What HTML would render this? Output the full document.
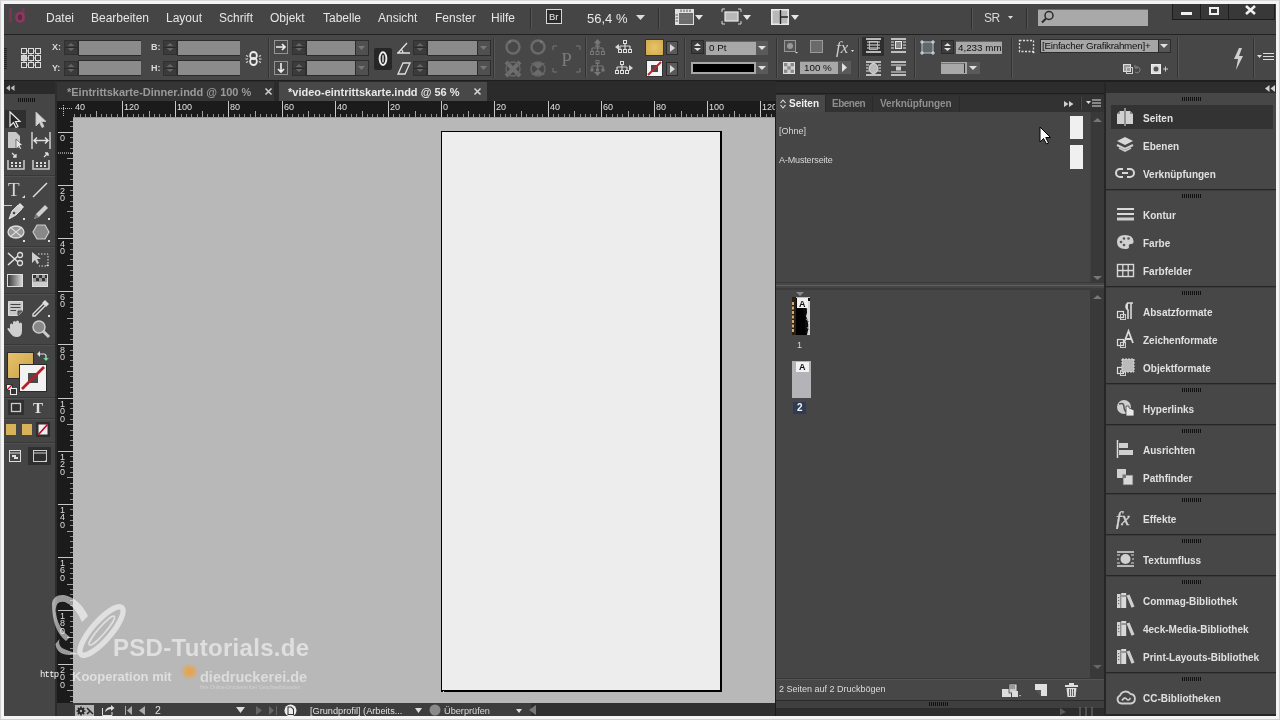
<!DOCTYPE html>
<html><head><meta charset="utf-8">
<style>
*{margin:0;padding:0;box-sizing:border-box}
html,body{width:1280px;height:720px;overflow:hidden;background:#f4f4f4;font-family:"Liberation Sans",sans-serif}
.a{position:absolute}
.t{position:absolute;white-space:nowrap;line-height:1;will-change:transform}
svg{overflow:visible;will-change:transform}
</style></head><body>
<div class="a" style="left:0px;top:0px;width:1px;height:720px;background:#d0d0d0;"></div>
<div class="a" style="left:0px;top:0px;width:1280px;height:1px;background:#d8d8d8;"></div>
<div class="a" style="left:1279px;top:0px;width:1px;height:720px;background:#d0d0d0;"></div>
<div class="a" style="left:0px;top:719px;width:1280px;height:1px;background:#d0d0d0;"></div>
<div class="a" style="left:4px;top:4px;width:1272px;height:712px;background:#464646;"></div>
<div class="a" style="left:4px;top:4px;width:1272px;height:30px;background:#454545;"></div>
<div class="a" style="left:4px;top:34px;width:1272px;height:1px;background:#222222;"></div>
<svg class="a" style="left:6px;top:6px;filter:blur(0.4px)" width="22" height="19" viewBox="0 0 22 19"><g fill="#7a3457"><rect x="3" y="2" width="3" height="14.5"/><rect x="15.5" y="2" width="3" height="14.5"/></g><ellipse cx="14" cy="11.3" rx="3.6" ry="4.2" fill="none" stroke="#8a3a62" stroke-width="2.6"/><ellipse cx="14" cy="11.3" rx="2" ry="2.8" fill="#5a2a40"/></svg>
<div class="t" style="left:46px;top:11.6px;font-size:12px;color:#e6e6e6;font-weight:normal;">Datei</div>
<div class="t" style="left:91px;top:11.6px;font-size:12px;color:#e6e6e6;font-weight:normal;">Bearbeiten</div>
<div class="t" style="left:166px;top:11.6px;font-size:12px;color:#e6e6e6;font-weight:normal;">Layout</div>
<div class="t" style="left:219px;top:11.6px;font-size:12px;color:#e6e6e6;font-weight:normal;">Schrift</div>
<div class="t" style="left:270px;top:11.6px;font-size:12px;color:#e6e6e6;font-weight:normal;">Objekt</div>
<div class="t" style="left:323px;top:11.6px;font-size:12px;color:#e6e6e6;font-weight:normal;">Tabelle</div>
<div class="t" style="left:378px;top:11.6px;font-size:12px;color:#e6e6e6;font-weight:normal;">Ansicht</div>
<div class="t" style="left:435px;top:11.6px;font-size:12px;color:#e6e6e6;font-weight:normal;">Fenster</div>
<div class="t" style="left:491px;top:11.6px;font-size:12px;color:#e6e6e6;font-weight:normal;">Hilfe</div>
<div class="a" style="left:530px;top:8px;width:1px;height:21px;background:#2e2e2e;"></div>
<div class="a" style="left:531px;top:8px;width:1px;height:21px;background:#555555;"></div>
<div class="a" style="left:658px;top:8px;width:1px;height:21px;background:#2e2e2e;"></div>
<div class="a" style="left:659px;top:8px;width:1px;height:21px;background:#555555;"></div>
<div class="a" style="left:971px;top:8px;width:1px;height:21px;background:#2e2e2e;"></div>
<div class="a" style="left:972px;top:8px;width:1px;height:21px;background:#555555;"></div>
<div class="a" style="left:1026px;top:8px;width:1px;height:21px;background:#2e2e2e;"></div>
<div class="a" style="left:1027px;top:8px;width:1px;height:21px;background:#555555;"></div>
<div class="a" style="left:546px;top:9px;width:16px;height:15px;background:#2a2a2a;border:1px solid #d8d8d8"></div>
<div class="t" style="left:549px;top:12px;font-size:9.5px;color:#e8e8e8;font-weight:normal;">Br</div>
<div class="t" style="left:587px;top:11.5px;font-size:13px;color:#e8e8e8;font-weight:normal;">56,4 %</div>
<svg class="a" style="left:636px;top:15px;" width="10" height="6" viewBox="0 0 10 6"><path d="M0 0H9L4.5 5Z" fill="#dcdcdc"/></svg>
<svg class="a" style="left:675px;top:9px;" width="19" height="16" viewBox="0 0 19 16"><rect x="0" y="0" width="19" height="16" fill="#e0e0e0"/><rect x="4" y="4" width="14" height="11" fill="#6c6c6c"/><path d="M6 0.5V3M9 0.5V3M12 0.5V3M15 0.5V3M0.5 6H3M0.5 9H3M0.5 12H3" stroke="#555" stroke-width="1"/><path d="M4 7H18M4 10H18" stroke="#7a7a7a" stroke-width="0.8"/></svg>
<svg class="a" style="left:695px;top:15px;" width="9" height="6" viewBox="0 0 9 6"><path d="M0 0H8L4 5Z" fill="#e6e6e6"/></svg>
<svg class="a" style="left:722px;top:9px;" width="19" height="15" viewBox="0 0 19 15"><path d="M0 3V0H3M16 0H19V3M19 12V15H16M3 15H0V12" fill="none" stroke="#d8d8d8"/><rect x="3" y="3" width="13" height="9" fill="#b8b8b8" stroke="#e8e8e8" stroke-width="1.2"/></svg>
<svg class="a" style="left:743px;top:15px;" width="9" height="6" viewBox="0 0 9 6"><path d="M0 0H8L4 5Z" fill="#e6e6e6"/></svg>
<svg class="a" style="left:771px;top:9px;" width="18" height="16" viewBox="0 0 18 16"><rect x="0.8" y="0.8" width="16.4" height="14.4" fill="#b8b8b8" stroke="#e8e8e8" stroke-width="1.6"/><path d="M9.5 1V15M9.5 8H17" stroke="#222" stroke-width="1.4"/></svg>
<svg class="a" style="left:791px;top:15px;" width="9" height="6" viewBox="0 0 9 6"><path d="M0 0H8L4 5Z" fill="#e6e6e6"/></svg>
<div class="t" style="left:984px;top:12px;font-size:12px;color:#d8d8d8;font-weight:normal;letter-spacing:-0.5px">SR</div>
<svg class="a" style="left:1008px;top:16px;" width="6" height="4" viewBox="0 0 6 4"><path d="M0 0H5L2.5 3Z" fill="#dcdcdc"/></svg>
<div class="a" style="left:1038px;top:9px;width:110px;height:17px;background:#a9a9a9;border-top:1px solid #6a6a6a"></div>
<svg class="a" style="left:1041px;top:10px;" width="14" height="14" viewBox="0 0 14 14"><circle cx="8" cy="5.5" r="4" fill="none" stroke="#2a2a2a" stroke-width="1.5"/><path d="M5 8.5L1 12.5" stroke="#2a2a2a" stroke-width="2"/></svg>
<div class="a" style="left:1172px;top:4px;width:103px;height:16px;background:#383838;border:1px solid #1c1c1c;border-top:none"></div>
<div class="a" style="left:1200px;top:4px;width:1px;height:16px;background:#1c1c1c;"></div>
<div class="a" style="left:1228px;top:4px;width:1px;height:16px;background:#1c1c1c;"></div>
<div class="a" style="left:1181px;top:12px;width:11px;height:3px;background:#f0f0f0;"></div>
<div class="a" style="left:1209px;top:7px;width:10px;height:8px;background:transparent;border:2px solid #f0f0f0"></div>
<svg class="a" style="left:1245px;top:5px;" width="11" height="10" viewBox="0 0 11 10"><path d="M1 1L10 9M10 1L1 9" stroke="#f0f0f0" stroke-width="2.6"/></svg>
<div class="a" style="left:4px;top:35px;width:1272px;height:46px;background:#474747;"></div>
<div class="a" style="left:4px;top:80px;width:1272px;height:1px;background:#1e1e1e;"></div>
<div class="a" style="left:4px;top:48px;width:3px;height:1px;background:#222;"></div>
<div class="a" style="left:4px;top:50px;width:3px;height:1px;background:#222;"></div>
<div class="a" style="left:4px;top:52px;width:3px;height:1px;background:#222;"></div>
<div class="a" style="left:4px;top:54px;width:3px;height:1px;background:#222;"></div>
<div class="a" style="left:4px;top:56px;width:3px;height:1px;background:#222;"></div>
<div class="a" style="left:4px;top:58px;width:3px;height:1px;background:#222;"></div>
<div class="a" style="left:4px;top:60px;width:3px;height:1px;background:#222;"></div>
<div class="a" style="left:4px;top:62px;width:3px;height:1px;background:#222;"></div>
<div class="a" style="left:4px;top:64px;width:3px;height:1px;background:#222;"></div>
<div class="a" style="left:4px;top:66px;width:3px;height:1px;background:#222;"></div>
<div class="a" style="left:4px;top:68px;width:3px;height:1px;background:#222;"></div>
<svg class="a" style="left:21px;top:48px;" width="20" height="20" viewBox="0 0 20 20"><rect x="0.5" y="0.5" width="5" height="5" fill="none" stroke="#dcdcdc" stroke-width="1"/><rect x="0.5" y="7.5" width="5" height="5" fill="#cfcfcf" stroke="#dcdcdc" stroke-width="1"/><rect x="0.5" y="14.5" width="5" height="5" fill="none" stroke="#dcdcdc" stroke-width="1"/><rect x="7.5" y="0.5" width="5" height="5" fill="none" stroke="#dcdcdc" stroke-width="1"/><rect x="7.5" y="7.5" width="5" height="5" fill="none" stroke="#dcdcdc" stroke-width="1"/><rect x="7.5" y="14.5" width="5" height="5" fill="none" stroke="#dcdcdc" stroke-width="1"/><rect x="14.5" y="0.5" width="5" height="5" fill="none" stroke="#dcdcdc" stroke-width="1"/><rect x="14.5" y="7.5" width="5" height="5" fill="none" stroke="#dcdcdc" stroke-width="1"/><rect x="14.5" y="14.5" width="5" height="5" fill="none" stroke="#dcdcdc" stroke-width="1"/><path d="M6 3H7M13 3H14M6 10H7M13 10H14M6 17H7M13 17H14M3 6V7M3 13V14M10 6V7M10 13V14M17 6V7M17 13V14" stroke="#dcdcdc"/></svg>
<div class="t" style="left:52px;top:43px;font-size:9px;color:#d8d8d8;font-weight:bold;">X:</div>
<div class="t" style="left:52px;top:64px;font-size:9px;color:#d8d8d8;font-weight:bold;">Y:</div>
<div class="a" style="left:64px;top:40px;width:14px;height:15px;background:#3b3b3b;border:1px solid #303030"></div>
<div class="a" style="left:65px;top:47px;width:12px;height:1px;background:#2a2a2a;"></div>
<svg class="a" style="left:67px;top:42px;" width="9" height="11" viewBox="0 0 9 11"><path d="M0.5 4L4 1L7.5 4Z" fill="#666"/><path d="M0.5 6L4 9L7.5 6Z" fill="#666"/></svg>
<div class="a" style="left:78px;top:40px;width:63px;height:16px;background:#8b8b8b;border:1px solid #2c2c2c;border-right:none"></div>
<div class="a" style="left:64px;top:61px;width:14px;height:15px;background:#3b3b3b;border:1px solid #303030"></div>
<div class="a" style="left:65px;top:68px;width:12px;height:1px;background:#2a2a2a;"></div>
<svg class="a" style="left:67px;top:63px;" width="9" height="11" viewBox="0 0 9 11"><path d="M0.5 4L4 1L7.5 4Z" fill="#666"/><path d="M0.5 6L4 9L7.5 6Z" fill="#666"/></svg>
<div class="a" style="left:78px;top:60px;width:63px;height:16px;background:#8b8b8b;border:1px solid #2c2c2c;border-right:none"></div>
<div class="t" style="left:151px;top:43px;font-size:9px;color:#d8d8d8;font-weight:bold;">B:</div>
<div class="t" style="left:151px;top:64px;font-size:9px;color:#d8d8d8;font-weight:bold;">H:</div>
<div class="a" style="left:163px;top:40px;width:14px;height:15px;background:#3b3b3b;border:1px solid #303030"></div>
<div class="a" style="left:164px;top:47px;width:12px;height:1px;background:#2a2a2a;"></div>
<svg class="a" style="left:166px;top:42px;" width="9" height="11" viewBox="0 0 9 11"><path d="M0.5 4L4 1L7.5 4Z" fill="#666"/><path d="M0.5 6L4 9L7.5 6Z" fill="#666"/></svg>
<div class="a" style="left:177px;top:40px;width:63px;height:16px;background:#8b8b8b;border:1px solid #2c2c2c;border-right:none"></div>
<div class="a" style="left:163px;top:61px;width:14px;height:15px;background:#3b3b3b;border:1px solid #303030"></div>
<div class="a" style="left:164px;top:68px;width:12px;height:1px;background:#2a2a2a;"></div>
<svg class="a" style="left:166px;top:63px;" width="9" height="11" viewBox="0 0 9 11"><path d="M0.5 4L4 1L7.5 4Z" fill="#666"/><path d="M0.5 6L4 9L7.5 6Z" fill="#666"/></svg>
<div class="a" style="left:177px;top:60px;width:63px;height:16px;background:#8b8b8b;border:1px solid #2c2c2c;border-right:none"></div>
<svg class="a" style="left:245px;top:51px;" width="17" height="16" viewBox="0 0 17 16"><rect x="5.2" y="1" width="6.6" height="7.2" rx="3.3" fill="none" stroke="#ececec" stroke-width="1.8"/><rect x="5.2" y="6.8" width="6.6" height="7.2" rx="3.3" fill="none" stroke="#ececec" stroke-width="1.8"/><path d="M1 4.5L3.2 5.5M0.5 8H3M1 11.5L3.2 10.5M16 4.5L13.8 5.5M16.5 8H14M16 11.5L13.8 10.5" stroke="#e0e0e0" stroke-width="1.1"/></svg>
<div class="a" style="left:268px;top:38px;width:1px;height:40px;background:#333;"></div>
<div class="a" style="left:269px;top:38px;width:1px;height:40px;background:#555;"></div>
<svg class="a" style="left:274px;top:40px;" width="14" height="14" viewBox="0 0 14 14"><rect x="0.5" y="0.5" width="13" height="13" fill="none" stroke="#e0e0e0" stroke-dasharray="1 1"/><path d="M2 7H11M8 4L11 7L8 10" stroke="#f0f0f0" stroke-width="1.6" fill="none"/></svg>
<svg class="a" style="left:274px;top:61px;" width="14" height="14" viewBox="0 0 14 14"><rect x="0.5" y="0.5" width="13" height="13" fill="none" stroke="#e0e0e0" stroke-dasharray="1 1"/><path d="M7 2V11M4 8L7 11L10 8" stroke="#f0f0f0" stroke-width="1.6" fill="none"/></svg>
<div class="a" style="left:292px;top:40px;width:14px;height:15px;background:#3b3b3b;border:1px solid #303030"></div>
<div class="a" style="left:293px;top:47px;width:12px;height:1px;background:#2a2a2a;"></div>
<svg class="a" style="left:295px;top:42px;" width="9" height="11" viewBox="0 0 9 11"><path d="M0.5 4L4 1L7.5 4Z" fill="#666"/><path d="M0.5 6L4 9L7.5 6Z" fill="#666"/></svg>
<div class="a" style="left:306px;top:40px;width:49px;height:16px;background:#8b8b8b;border:1px solid #2c2c2c;border-right:none"></div>
<div class="a" style="left:355px;top:40px;width:14px;height:16px;background:#505050;border:1px solid #2c2c2c"></div>
<svg class="a" style="left:358px;top:46px;" width="8" height="5" viewBox="0 0 8 5"><path d="M0 0H7L3.5 4Z" fill="#777"/></svg>
<div class="a" style="left:292px;top:61px;width:14px;height:15px;background:#3b3b3b;border:1px solid #303030"></div>
<div class="a" style="left:293px;top:68px;width:12px;height:1px;background:#2a2a2a;"></div>
<svg class="a" style="left:295px;top:63px;" width="9" height="11" viewBox="0 0 9 11"><path d="M0.5 4L4 1L7.5 4Z" fill="#666"/><path d="M0.5 6L4 9L7.5 6Z" fill="#666"/></svg>
<div class="a" style="left:306px;top:60px;width:49px;height:16px;background:#8b8b8b;border:1px solid #2c2c2c;border-right:none"></div>
<div class="a" style="left:355px;top:60px;width:14px;height:16px;background:#505050;border:1px solid #2c2c2c"></div>
<svg class="a" style="left:358px;top:66px;" width="8" height="5" viewBox="0 0 8 5"><path d="M0 0H7L3.5 4Z" fill="#777"/></svg>
<div class="a" style="left:374px;top:48px;width:18px;height:22px;background:#262626;border-radius:2px"></div>
<svg class="a" style="left:378px;top:51px;" width="10" height="16" viewBox="0 0 10 16"><ellipse cx="5" cy="7.6" rx="3.4" ry="6.4" fill="none" stroke="#efefef" stroke-width="1.9"/><rect x="4.2" y="4" width="1.6" height="7.5" rx="0.8" fill="#cfcfcf"/></svg>
<svg class="a" style="left:396px;top:41px;" width="15" height="13" viewBox="0 0 15 13"><path d="M1 12H14M2 12L11 2M7 12A6 6 0 0 0 5 8" stroke="#e0e0e0" stroke-width="1.3" fill="none"/></svg>
<svg class="a" style="left:397px;top:62px;" width="14" height="13" viewBox="0 0 14 13"><path d="M1 12L6 1H13L8 12Z" stroke="#e0e0e0" stroke-width="1.3" fill="none"/></svg>
<div class="a" style="left:413px;top:40px;width:14px;height:15px;background:#3b3b3b;border:1px solid #303030"></div>
<div class="a" style="left:414px;top:47px;width:12px;height:1px;background:#2a2a2a;"></div>
<svg class="a" style="left:416px;top:42px;" width="9" height="11" viewBox="0 0 9 11"><path d="M0.5 4L4 1L7.5 4Z" fill="#666"/><path d="M0.5 6L4 9L7.5 6Z" fill="#666"/></svg>
<div class="a" style="left:427px;top:40px;width:50px;height:16px;background:#8b8b8b;border:1px solid #2c2c2c;border-right:none"></div>
<div class="a" style="left:477px;top:40px;width:14px;height:16px;background:#505050;border:1px solid #2c2c2c"></div>
<svg class="a" style="left:480px;top:46px;" width="8" height="5" viewBox="0 0 8 5"><path d="M0 0H7L3.5 4Z" fill="#777"/></svg>
<div class="a" style="left:413px;top:61px;width:14px;height:15px;background:#3b3b3b;border:1px solid #303030"></div>
<div class="a" style="left:414px;top:68px;width:12px;height:1px;background:#2a2a2a;"></div>
<svg class="a" style="left:416px;top:63px;" width="9" height="11" viewBox="0 0 9 11"><path d="M0.5 4L4 1L7.5 4Z" fill="#666"/><path d="M0.5 6L4 9L7.5 6Z" fill="#666"/></svg>
<div class="a" style="left:427px;top:60px;width:50px;height:16px;background:#8b8b8b;border:1px solid #2c2c2c;border-right:none"></div>
<div class="a" style="left:477px;top:60px;width:14px;height:16px;background:#505050;border:1px solid #2c2c2c"></div>
<svg class="a" style="left:480px;top:66px;" width="8" height="5" viewBox="0 0 8 5"><path d="M0 0H7L3.5 4Z" fill="#777"/></svg>
<div class="a" style="left:493px;top:38px;width:1px;height:40px;background:#333;"></div>
<div class="a" style="left:494px;top:38px;width:1px;height:40px;background:#555;"></div>
<svg class="a" style="left:505px;top:39px;" width="16" height="16" viewBox="0 0 16 16"><circle cx="8" cy="8" r="6.5" fill="none" stroke="#6a6a6a" stroke-width="2.5"/><path d="M3 2L7 1L5 5Z" fill="#777"/></svg>
<svg class="a" style="left:530px;top:39px;" width="16" height="16" viewBox="0 0 16 16"><circle cx="8" cy="8" r="6.5" fill="none" stroke="#6a6a6a" stroke-width="2.5"/><path d="M13 2L9 1L11 5Z" fill="#777"/></svg>
<svg class="a" style="left:505px;top:61px;" width="16" height="16" viewBox="0 0 16 16"><path d="M1 1L15 15M15 1L1 15" stroke="#6e6e6e" stroke-width="4"/><circle cx="8" cy="8" r="7" fill="none" stroke="#666" stroke-width="1.5"/></svg>
<svg class="a" style="left:530px;top:61px;" width="16" height="16" viewBox="0 0 16 16"><path d="M1 2H15L1 14H15Z" fill="#6a6a6a"/><circle cx="8" cy="8" r="7" fill="none" stroke="#666" stroke-width="1.5"/></svg>
<svg class="a" style="left:553px;top:46px;" width="27" height="26" viewBox="0 0 27 26"><path d="M0 4V0H4M23 0H27V4M27 22V26H23M4 26H0V22" fill="none" stroke="#777"/><text x="13.5" y="20" font-family="Liberation Serif" font-size="19" fill="#7a7a7a" text-anchor="middle">P</text></svg>
<div class="a" style="left:585px;top:38px;width:1px;height:40px;background:#333;"></div>
<div class="a" style="left:586px;top:38px;width:1px;height:40px;background:#555;"></div>
<svg class="a" style="left:590px;top:39px;" width="15" height="16" viewBox="0 0 15 16"><path d="M7.5 0L11 4H4Z" fill="#777"/><path d="M7.5 5V9M2 9H13M2 9V13M7.5 9V13M13 9V13" stroke="#777" stroke-width="1.2"/><rect x="0.5" y="12.5" width="3" height="3" fill="none" stroke="#777"/><rect x="6" y="12.5" width="3" height="3" fill="none" stroke="#777"/><rect x="11.5" y="12.5" width="3" height="3" fill="none" stroke="#777"/><rect x="6" y="4.5" width="3" height="3" fill="none" stroke="#777"/></svg>
<svg class="a" style="left:590px;top:60px;" width="15" height="16" viewBox="0 0 15 16"><path d="M7.5 16L11 12H4Z" fill="#777"/><path d="M7.5 2V6M2 6H13M2 6V10M7.5 6V10M13 6V10" stroke="#777" stroke-width="1.2"/><rect x="0.5" y="8.5" width="3" height="3" fill="#777"/><rect x="6" y="8.5" width="3" height="3" fill="#777"/><rect x="11.5" y="8.5" width="3" height="3" fill="#777"/><rect x="6" y="0.5" width="3" height="3" fill="none" stroke="#777"/></svg>
<svg class="a" style="left:615px;top:40px;" width="18" height="14" viewBox="0 0 18 14"><path d="M0 7L4 4V10Z" fill="#d8d8d8"/><path d="M10 3V6M5 6H15M5 6V9M10 6V9M15 6V9" stroke="#d8d8d8" stroke-width="1.2"/><rect x="3.5" y="9.5" width="3" height="3" fill="none" stroke="#e0e0e0"/><rect x="8.5" y="9.5" width="3" height="3" fill="none" stroke="#e0e0e0"/><rect x="13.5" y="9.5" width="3" height="3" fill="none" stroke="#e0e0e0"/><rect x="8.5" y="0.5" width="3" height="3" fill="none" stroke="#e0e0e0"/></svg>
<svg class="a" style="left:615px;top:61px;" width="18" height="14" viewBox="0 0 18 14"><path d="M18 7L14 4V10Z" fill="#d8d8d8"/><path d="M7 3V6M2 6H12M2 6V9M7 6V9M12 6V9" stroke="#d8d8d8" stroke-width="1.2"/><rect x="0.5" y="9.5" width="3" height="3" fill="none" stroke="#e0e0e0"/><rect x="5.5" y="9.5" width="3" height="3" fill="none" stroke="#e0e0e0"/><rect x="10.5" y="9.5" width="3" height="3" fill="none" stroke="#e0e0e0"/><rect x="5.5" y="0.5" width="3" height="3" fill="none" stroke="#e0e0e0"/></svg>
<div class="a" style="left:645px;top:39px;width:19px;height:17px;background:#d9b55a;border:1px solid #333;background:radial-gradient(circle at 50% 50%,#e8c468,#cfa94f)"></div>
<div class="a" style="left:666px;top:41px;width:12px;height:14px;background:#5a5a5a;border:1px solid #2a2a2a"></div>
<svg class="a" style="left:669px;top:44px;" width="7" height="8" viewBox="0 0 7 8"><path d="M1 0L6 4L1 8Z" fill="#d8d8d8"/></svg>
<div class="a" style="left:646px;top:60px;width:17px;height:17px;background:#f4f4f4;border:1px solid #333"></div>
<svg class="a" style="left:647px;top:61px;" width="15" height="15" viewBox="0 0 15 15"><rect x="4" y="4" width="7" height="7" fill="#4a4a4a"/><path d="M1 14L14 1" stroke="#c8202a" stroke-width="2"/></svg>
<div class="a" style="left:666px;top:62px;width:12px;height:14px;background:#5a5a5a;border:1px solid #2a2a2a"></div>
<svg class="a" style="left:669px;top:65px;" width="7" height="8" viewBox="0 0 7 8"><path d="M1 0L6 4L1 8Z" fill="#d8d8d8"/></svg>
<div class="a" style="left:684px;top:38px;width:1px;height:40px;background:#333;"></div>
<div class="a" style="left:685px;top:38px;width:1px;height:40px;background:#555;"></div>
<div class="a" style="left:691px;top:40px;width:13px;height:14px;background:#3c3c3c;border:1px solid #2a2a2a"></div>
<svg class="a" style="left:693px;top:42px;" width="9" height="10" viewBox="0 0 9 10"><path d="M1 4L4.5 1L8 4Z" fill="#e0e0e0"/><path d="M1 6L4.5 9L8 6Z" fill="#e0e0e0"/></svg>
<div class="a" style="left:706px;top:41px;width:50px;height:14px;background:#a8a8a8;border-top:1px solid #666"></div>
<div class="t" style="left:709px;top:43px;font-size:9.8px;color:#111;font-weight:normal;">0 Pt</div>
<div class="a" style="left:756px;top:41px;width:12px;height:14px;background:#5a5a5a;"></div>
<svg class="a" style="left:758px;top:46px;" width="9" height="5" viewBox="0 0 9 5"><path d="M0 0H8L4 4Z" fill="#e0e0e0"/></svg>
<div class="a" style="left:691px;top:62px;width:65px;height:12px;background:#a8a8a8;"></div>
<div class="a" style="left:693px;top:64px;width:61px;height:8px;background:#000;"></div>
<div class="a" style="left:756px;top:62px;width:12px;height:12px;background:#5a5a5a;"></div>
<svg class="a" style="left:758px;top:66px;" width="9" height="5" viewBox="0 0 9 5"><path d="M0 0H8L4 4Z" fill="#e0e0e0"/></svg>
<div class="a" style="left:776px;top:38px;width:1px;height:40px;background:#333;"></div>
<div class="a" style="left:777px;top:38px;width:1px;height:40px;background:#555;"></div>
<svg class="a" style="left:784px;top:40px;" width="14" height="13" viewBox="0 0 14 13"><rect x="0.5" y="0.5" width="11" height="11" fill="#555" stroke="#e0e0e0" stroke-dasharray="1 1"/><circle cx="6" cy="6" r="3" fill="#999"/><path d="M11 12H14L12.5 13.5Z" fill="#ddd"/></svg>
<svg class="a" style="left:810px;top:40px;" width="14" height="13" viewBox="0 0 14 13"><rect x="0.5" y="0.5" width="12" height="12" fill="#6a6a6a" stroke="#9a9a9a"/></svg>
<div class="t" style="left:836px;top:39px;font-size:17px;color:#cfcfcf;font-weight:normal;font-family:'Liberation Serif'"><i>fx</i></div>
<svg class="a" style="left:851px;top:50px;" width="4" height="3" viewBox="0 0 4 3"><path d="M0 0H3L1.5 2Z" fill="#ddd"/></svg>
<svg class="a" style="left:783px;top:62px;" width="12" height="12" viewBox="0 0 12 12"><rect x="0.5" y="0.5" width="11" height="11" fill="#cfcfcf" stroke="#ddd"/><rect x="1" y="1" width="3.3" height="3.3" fill="#888"/><rect x="7.6" y="1" width="3.3" height="3.3" fill="#888"/><rect x="4.3" y="4.3" width="3.3" height="3.3" fill="#888"/><rect x="1" y="7.6" width="3.3" height="3.3" fill="#888"/><rect x="7.6" y="7.6" width="3.3" height="3.3" fill="#888"/></svg>
<div class="a" style="left:800px;top:61px;width:38px;height:13px;background:#a8a8a8;border-top:1px solid #666"></div>
<div class="t" style="left:804px;top:62.8px;font-size:9.8px;color:#111;font-weight:normal;">100 %</div>
<div class="a" style="left:838px;top:61px;width:13px;height:13px;background:#5a5a5a;"></div>
<svg class="a" style="left:842px;top:63px;" width="6" height="9" viewBox="0 0 6 9"><path d="M0 0L5 4.5L0 9Z" fill="#e0e0e0"/></svg>
<div class="a" style="left:858px;top:38px;width:1px;height:40px;background:#333;"></div>
<div class="a" style="left:859px;top:38px;width:1px;height:40px;background:#555;"></div>
<div class="a" style="left:862px;top:37px;width:22px;height:19px;background:#2e2e2e;"></div>
<svg class="a" style="left:866px;top:38px;" width="15" height="15" viewBox="0 0 15 15"><path d="M0 1H15M0 14H15" stroke="#e8e8e8" stroke-width="1.3"/><path d="M1 4H14M1 7H14M1 10H14" stroke="#e8e8e8" stroke-width="1"/><rect x="3.5" y="3.5" width="8" height="8" fill="none" stroke="#ccc" stroke-width="0.8"/></svg>
<svg class="a" style="left:891px;top:38px;" width="15" height="15" viewBox="0 0 15 15"><path d="M0 1H15M0 14H15" stroke="#e8e8e8" stroke-width="1.3"/><path d="M0 4H3M12 4H15M0 7H3M12 7H15M0 10H3M12 10H15" stroke="#e8e8e8"/><rect x="4.5" y="3.5" width="6" height="7" fill="#888" stroke="#e8e8e8"/></svg>
<svg class="a" style="left:866px;top:61px;" width="15" height="15" viewBox="0 0 15 15"><path d="M0 1H15M0 14H15" stroke="#e8e8e8" stroke-width="1.3"/><path d="M0 4H3M12 4H15M0 7H2M13 7H15M0 10H3M12 10H15" stroke="#e8e8e8"/><ellipse cx="7.5" cy="7.5" rx="4.5" ry="5" fill="#bbb" stroke="#e8e8e8"/></svg>
<svg class="a" style="left:891px;top:61px;" width="15" height="15" viewBox="0 0 15 15"><path d="M0 1H15M0 14H15" stroke="#e8e8e8" stroke-width="1.3"/><path d="M0 4H15M0 11H15" stroke="#e8e8e8" stroke-width="1.2"/><rect x="5" y="5.5" width="5" height="4" fill="#ccc"/></svg>
<div class="a" style="left:914px;top:38px;width:1px;height:40px;background:#333;"></div>
<div class="a" style="left:915px;top:38px;width:1px;height:40px;background:#555;"></div>
<svg class="a" style="left:920px;top:40px;" width="15" height="15" viewBox="0 0 15 15"><rect x="2" y="2" width="11" height="11" fill="#666" stroke="#9bb" stroke-width="1.2"/><path d="M0 2H4M2 0V4M11 2H15M13 0V4M0 13H4M2 11V15M11 13H15M13 11V15" stroke="#cde" stroke-width="1"/></svg>
<div class="a" style="left:941px;top:40px;width:13px;height:14px;background:#3c3c3c;border:1px solid #2a2a2a"></div>
<svg class="a" style="left:943px;top:42px;" width="9" height="10" viewBox="0 0 9 10"><path d="M1 4L4.5 1L8 4Z" fill="#e0e0e0"/><path d="M1 6L4.5 9L8 6Z" fill="#e0e0e0"/></svg>
<div class="a" style="left:956px;top:41px;width:46px;height:13px;background:#a8a8a8;border-top:1px solid #666"></div>
<div class="t" style="left:958px;top:42.5px;font-size:9.8px;color:#111;font-weight:normal;">4,233 mm</div>
<div class="a" style="left:941px;top:62px;width:26px;height:12px;background:#a8a8a8;"></div>
<div class="a" style="left:941px;top:63px;width:24px;height:10px;background:#a8a8a8;border-right:1px solid #333;border-top:1px solid #777"></div>
<div class="a" style="left:967px;top:62px;width:13px;height:12px;background:#5a5a5a;"></div>
<svg class="a" style="left:969px;top:66px;" width="9" height="5" viewBox="0 0 9 5"><path d="M0 0H8L4 4Z" fill="#e0e0e0"/></svg>
<div class="a" style="left:1011px;top:38px;width:1px;height:40px;background:#333;"></div>
<div class="a" style="left:1012px;top:38px;width:1px;height:40px;background:#555;"></div>
<svg class="a" style="left:1019px;top:40px;" width="16" height="13" viewBox="0 0 16 13"><rect x="0.5" y="0.5" width="14" height="11" fill="none" stroke="#ddd" stroke-dasharray="2 1.5" stroke-width="1.3"/><path d="M13 12H16L14.5 13.5Z" fill="#ddd"/></svg>
<div class="a" style="left:1040px;top:39px;width:118px;height:14px;background:#a6a6a6;border:1px solid #2c2c2c;border-right:none"></div>
<div class="t" style="left:1042px;top:41px;font-size:9.8px;color:#111;font-weight:normal;letter-spacing:-0.25px">[Einfacher Grafikrahmen]+</div>
<div class="a" style="left:1158px;top:39px;width:13px;height:14px;background:#555;border:1px solid #2c2c2c"></div>
<svg class="a" style="left:1160px;top:44px;" width="9" height="5" viewBox="0 0 9 5"><path d="M0 0H8L4 4Z" fill="#e0e0e0"/></svg>
<svg class="a" style="left:1123px;top:64px;" width="20" height="10" viewBox="0 0 20 10"><rect x="0.5" y="0.5" width="7" height="7" fill="#999" stroke="#ddd"/><rect x="3.5" y="3.5" width="6" height="6" fill="none" stroke="#ccc"/><path d="M13 3A3 3 0 1 1 12 8M12 1V4H15" stroke="#888" fill="none"/></svg>
<svg class="a" style="left:1151px;top:64px;" width="18" height="10" viewBox="0 0 18 10"><rect x="0.5" y="0.5" width="9" height="9" fill="#ddd" stroke="#eee"/><circle cx="5" cy="5" r="2.5" fill="#555"/><path d="M12 5H17M14.5 2.5V7.5" stroke="#ccc"/></svg>
<div class="a" style="left:1177px;top:38px;width:1px;height:40px;background:#333;"></div>
<div class="a" style="left:1178px;top:38px;width:1px;height:40px;background:#555;"></div>
<svg class="a" style="left:1233px;top:48px;" width="11" height="23" viewBox="0 0 11 23"><path d="M6 0L1 11H5L3 22L10 8H6L9 0Z" fill="#cfcfcf"/></svg>
<div class="a" style="left:1253px;top:38px;width:1px;height:40px;background:#333;"></div>
<div class="a" style="left:1254px;top:38px;width:1px;height:40px;background:#555;"></div>
<svg class="a" style="left:1257px;top:53px;" width="17" height="8" viewBox="0 0 17 8"><path d="M0 2H5L2.5 5Z" fill="#ddd"/><path d="M6 0.5H17M6 3.5H17M6 6.5H17" stroke="#ddd" stroke-width="1.2"/></svg>
<div class="a" style="left:4px;top:81px;width:1272px;height:14px;background:#2e2e2e;"></div>
<div class="a" style="left:57px;top:81px;width:719px;height:20px;background:#2b2b2b;"></div>
<div class="a" style="left:4px;top:81px;width:51px;height:13px;background:#2a2a2a;"></div>
<svg class="a" style="left:6px;top:85px;" width="9" height="6" viewBox="0 0 9 6"><path d="M0 3L4 0V6Z M4.5 3L8.5 0V6Z" fill="#bbb"/></svg>
<div class="a" style="left:57px;top:82px;width:217px;height:19px;background:#353535;"></div>
<div class="t" style="left:67px;top:87.3px;font-size:11px;color:#9a9a9a;font-weight:bold;">*Eintrittskarte-Dinner.indd @ 100 %</div>
<svg class="a" style="left:265px;top:88px;" width="7" height="7" viewBox="0 0 7 7"><path d="M0.5 0.5L6.5 6.5M6.5 0.5L0.5 6.5" stroke="#d0d0d0" stroke-width="1.5"/></svg>
<div class="a" style="left:279px;top:82px;width:208px;height:19px;background:#484848;"></div>
<div class="t" style="left:288px;top:87.3px;font-size:11px;color:#e8e8e8;font-weight:bold;">*video-eintrittskarte.indd @ 56 %</div>
<svg class="a" style="left:474px;top:88px;" width="7" height="7" viewBox="0 0 7 7"><path d="M0.5 0.5L6.5 6.5M6.5 0.5L0.5 6.5" stroke="#d8d8d8" stroke-width="1.5"/></svg>
<div class="a" style="left:4px;top:94px;width:51px;height:622px;background:#454545;"></div>
<div class="a" style="left:55px;top:94px;width:2px;height:622px;background:#2c2c2c;"></div>
<div class="a" style="left:18px;top:98px;width:1px;height:4px;background:#111;"></div>
<div class="a" style="left:20px;top:98px;width:1px;height:4px;background:#111;"></div>
<div class="a" style="left:22px;top:98px;width:1px;height:4px;background:#111;"></div>
<div class="a" style="left:24px;top:98px;width:1px;height:4px;background:#111;"></div>
<div class="a" style="left:26px;top:98px;width:1px;height:4px;background:#111;"></div>
<div class="a" style="left:28px;top:98px;width:1px;height:4px;background:#111;"></div>
<div class="a" style="left:30px;top:98px;width:1px;height:4px;background:#111;"></div>
<div class="a" style="left:32px;top:98px;width:1px;height:4px;background:#111;"></div>
<div class="a" style="left:34px;top:98px;width:1px;height:4px;background:#111;"></div>
<div class="a" style="left:4px;top:175px;width:51px;height:1px;background:#383838;"></div>
<div class="a" style="left:4px;top:176px;width:51px;height:1px;background:#505050;"></div>
<div class="a" style="left:4px;top:246px;width:51px;height:1px;background:#383838;"></div>
<div class="a" style="left:4px;top:247px;width:51px;height:1px;background:#505050;"></div>
<div class="a" style="left:4px;top:293px;width:51px;height:1px;background:#383838;"></div>
<div class="a" style="left:4px;top:294px;width:51px;height:1px;background:#505050;"></div>
<div class="a" style="left:4px;top:344px;width:51px;height:1px;background:#383838;"></div>
<div class="a" style="left:4px;top:345px;width:51px;height:1px;background:#505050;"></div>
<div class="a" style="left:4px;top:397px;width:51px;height:1px;background:#383838;"></div>
<div class="a" style="left:4px;top:398px;width:51px;height:1px;background:#505050;"></div>
<div class="a" style="left:4px;top:418px;width:51px;height:1px;background:#383838;"></div>
<div class="a" style="left:4px;top:419px;width:51px;height:1px;background:#505050;"></div>
<div class="a" style="left:4px;top:442px;width:51px;height:1px;background:#383838;"></div>
<div class="a" style="left:4px;top:443px;width:51px;height:1px;background:#505050;"></div>
<div class="a" style="left:5px;top:110px;width:21px;height:18px;background:#2f2f2f;"></div>
<svg class="a" style="left:7px;top:111px;" width="18" height="18" viewBox="0 0 18 18"><path d="M3 1V15L6.5 11.5L9 16.5L11 15.5L8.5 10.5H13Z" fill="#222" stroke="#e8e8e8" stroke-width="1.2"/></svg>
<svg class="a" style="left:33px;top:111px;" width="18" height="18" viewBox="0 0 18 18"><path d="M3 1V15L6.5 11.5L9 16.5L11 15.5L8.5 10.5H13Z" fill="#d6d6d6" stroke="#bbb"/></svg>
<svg class="a" style="left:7px;top:131px;" width="18" height="18" viewBox="0 0 18 18"><path d="M1 1H9L13 5V17H1Z" fill="#c8c8c8"/><path d="M9 8V18L11.5 15.5L13 18.5L14.5 17.5L13 14.5H16Z" fill="#e8e8e8" stroke="#333" stroke-width="0.6"/></svg>
<svg class="a" style="left:31px;top:132px;" width="20" height="18" viewBox="0 0 20 18"><path d="M1 0V17M19 0V17" stroke="#cfcfcf" stroke-width="1.5"/><path d="M3 8.5H17M6 5.5L3 8.5L6 11.5M14 5.5L17 8.5L14 11.5" stroke="#e0e0e0" stroke-width="1.5" fill="none"/></svg>
<svg class="a" style="left:7px;top:152px;" width="18" height="18" viewBox="0 0 18 18"><path d="M5 1L9 5M9 2V5H6" stroke="#ddd" stroke-width="1.3" fill="none"/><path d="M1 8V17H17V8" stroke="#ccc" fill="none" stroke-width="1.5"/><rect x="4" y="10" width="2" height="2" fill="#ddd"/><rect x="8" y="10" width="2" height="2" fill="#ddd"/><rect x="12" y="10" width="2" height="2" fill="#ddd"/><rect x="4" y="13" width="2" height="2" fill="#ddd"/><rect x="8" y="13" width="2" height="2" fill="#ddd"/><rect x="12" y="13" width="2" height="2" fill="#ddd"/></svg>
<svg class="a" style="left:32px;top:152px;" width="18" height="18" viewBox="0 0 18 18"><path d="M16 1L12 5M16 1V4M16 1H13" stroke="#ddd" stroke-width="1.3" fill="none"/><path d="M1 8V17H17V8" stroke="#ccc" fill="none" stroke-width="1.5"/><rect x="4" y="10" width="2" height="2" fill="#ddd"/><rect x="8" y="10" width="2" height="2" fill="#ddd"/><rect x="12" y="10" width="2" height="2" fill="#ddd"/><rect x="4" y="13" width="2" height="2" fill="#ddd"/><rect x="8" y="13" width="2" height="2" fill="#ddd"/><rect x="12" y="13" width="2" height="2" fill="#ddd"/></svg>
<div class="t" style="left:8px;top:180px;font-size:19px;color:#d8d8d8;font-weight:normal;font-family:'Liberation Serif'">T</div>
<svg class="a" style="left:22px;top:195px;" width="3" height="3" viewBox="0 0 3 3"><path d="M3 0V3H0Z" fill="#ddd"/></svg>
<svg class="a" style="left:32px;top:181px;" width="18" height="18" viewBox="0 0 18 18"><path d="M1 16L15 2" stroke="#e0e0e0" stroke-width="1.5"/></svg>
<svg class="a" style="left:7px;top:202px;" width="18" height="18" viewBox="0 0 18 18"><path d="M2 17L5 9L11 3L15 7L9 13Z" fill="#cfcfcf" stroke="#eee" stroke-width="0.8"/><path d="M11 3L13 1L17 5L15 7" fill="#ddd"/><circle cx="7" cy="11" r="1.3" fill="#444"/><path d="M16 16H18V18H16Z" fill="#ddd"/></svg>
<div class="a" style="left:4px;top:205px;width:8px;height:1px;background:#ccc;"></div>
<svg class="a" style="left:32px;top:203px;" width="18" height="18" viewBox="0 0 18 18"><path d="M2 16L4 11L13 2L16 5L7 14Z" fill="#cfcfcf"/><path d="M2 16L4 11L7 14Z" fill="#777"/><path d="M16 15H18V17H16Z" fill="#ddd"/></svg>
<svg class="a" style="left:7px;top:224px;" width="18" height="18" viewBox="0 0 18 18"><ellipse cx="9" cy="8" rx="8" ry="6" fill="#999" stroke="#ddd" stroke-width="1.3"/><path d="M3 3L15 13M15 3L3 13" stroke="#ddd" stroke-width="1.1"/><path d="M16 16H18V18H16Z" fill="#ddd"/></svg>
<svg class="a" style="left:32px;top:224px;" width="18" height="18" viewBox="0 0 18 18"><path d="M5 1H13L17 8L13 15H5L1 8Z" fill="#888" stroke="#ccc" stroke-width="1.2"/><path d="M16 16H18V18H16Z" fill="#ddd"/></svg>
<svg class="a" style="left:7px;top:251px;" width="18" height="16" viewBox="0 0 18 16"><circle cx="13" cy="4" r="2.5" fill="none" stroke="#ddd" stroke-width="1.3"/><circle cx="13" cy="12" r="2.5" fill="none" stroke="#ddd" stroke-width="1.3"/><path d="M1 2L11 11M1 14L11 5" stroke="#e0e0e0" stroke-width="1.6"/></svg>
<svg class="a" style="left:31px;top:251px;" width="18" height="16" viewBox="0 0 18 16"><path d="M1 1V12L4 9L6 13L8 12L6 8H10Z" fill="#cfcfcf"/><path d="M7 3H17V15H8" stroke="#ddd" stroke-dasharray="1.5 1.5" fill="none"/><path d="M17 13L15 15H18Z" fill="#ddd"/></svg>
<svg class="a" style="left:7px;top:274px;" width="16" height="13" viewBox="0 0 16 13"><defs><linearGradient id="g1"><stop offset="0" stop-color="#333"/><stop offset="1" stop-color="#ddd"/></linearGradient></defs><rect x="0.5" y="0.5" width="15" height="12" fill="url(#g1)" stroke="#ddd"/></svg>
<svg class="a" style="left:32px;top:274px;" width="16" height="13" viewBox="0 0 16 13"><rect x="0.5" y="0.5" width="15" height="12" fill="#999" stroke="#ddd"/><path d="M1 1H4V4H1ZM7 1H10V4H7ZM13 1H15V4H13ZM4 4H7V7H4ZM10 4H13V7H10Z" fill="#333"/><rect x="1" y="8" width="14" height="4" fill="#ccc"/></svg>
<svg class="a" style="left:8px;top:301px;" width="15" height="15" viewBox="0 0 15 15"><path d="M0.5 0.5H14.5V10L10 14.5H0.5Z" fill="#c8c8c8" stroke="#ddd"/><path d="M2.5 3.5H12.5M2.5 6.5H12.5M2.5 9.5H8" stroke="#444" stroke-width="1.2"/><path d="M10 14.5V10H14.5" fill="#666" stroke="#444"/></svg>
<svg class="a" style="left:32px;top:299px;" width="18" height="18" viewBox="0 0 18 18"><path d="M13 1L17 5L14 8L10 4Z" fill="#ddd"/><path d="M11 5L1 15V17H3L13 7" fill="none" stroke="#ddd" stroke-width="1.4"/><path d="M16 16H18V18H16Z" fill="#ddd"/></svg>
<svg class="a" style="left:7px;top:320px;" width="18" height="18" viewBox="0 0 18 18"><path d="M3 9V5Q3 3.5 4.5 3.5Q6 3.5 6 5V2.5Q6 1 7.5 1Q9 1 9 2.5V2Q9 0.5 10.5 0.5Q12 0.5 12 2V4Q12 2.5 13.5 2.5Q15 2.5 15 4V11Q15 17 9.5 17Q6 17 4 14L0.5 9.5Q0 8 1.5 8Q2.5 8 3 9Z" fill="#cfcfcf"/></svg>
<svg class="a" style="left:32px;top:320px;" width="18" height="18" viewBox="0 0 18 18"><circle cx="7" cy="7" r="6" fill="#888" stroke="#ccc" stroke-width="1.5"/><path d="M11 11L17 17" stroke="#ccc" stroke-width="3"/></svg>
<div class="a" style="left:7px;top:352px;width:27px;height:27px;background:#d8b258;border:1px solid #2a2a2a;background:linear-gradient(135deg,#e7c26a,#c9a24a)"></div>
<svg class="a" style="left:37px;top:351px;" width="11" height="10" viewBox="0 0 11 10"><path d="M1 3H7A2 2 0 0 1 9 5V9" stroke="#ddd" fill="none" stroke-width="1.2"/><path d="M0 3L3 0V6Z" fill="#ddd"/><path d="M6 7H12L9 10Z" fill="#6fa" opacity="0.7"/></svg>
<div class="a" style="left:19px;top:364px;width:28px;height:28px;background:#f2f2f2;border:1px solid #2a2a2a"></div>
<svg class="a" style="left:20px;top:365px;" width="26" height="26" viewBox="0 0 26 26"><rect x="8" y="8" width="10" height="10" fill="#4a4a4a"/><path d="M2 24L24 2" stroke="#b81c26" stroke-width="2.6"/></svg>
<svg class="a" style="left:6px;top:384px;" width="11" height="11" viewBox="0 0 11 11"><rect x="0.5" y="0.5" width="6" height="6" fill="#f0f0f0" stroke="#333"/><path d="M1 6L6 1" stroke="#c02" stroke-width="1.2"/><rect x="4.5" y="4.5" width="6" height="6" fill="#333" stroke="#eee"/></svg>
<div class="a" style="left:8px;top:400px;width:16px;height:15px;background:#303030;"></div>
<svg class="a" style="left:10px;top:402px;" width="12" height="11" viewBox="0 0 12 11"><rect x="1.5" y="1.5" width="9" height="8" fill="none" stroke="#ccc" stroke-width="1.3"/></svg>
<div class="t" style="left:33px;top:401px;font-size:15px;color:#e0e0e0;font-weight:bold;font-family:'Liberation Serif'">T</div>
<div class="a" style="left:6px;top:424px;width:10px;height:11px;background:#d8b258;"></div>
<div class="a" style="left:22px;top:424px;width:10px;height:11px;background:#d8b258;"></div>
<div class="a" style="left:36px;top:422px;width:14px;height:15px;background:#2e2e2e;"></div>
<svg class="a" style="left:38px;top:424px;" width="10" height="11" viewBox="0 0 10 11"><rect x="0.5" y="0.5" width="9" height="10" fill="#eee"/><path d="M0.5 10.5L9.5 0.5" stroke="#c02" stroke-width="1.6"/></svg>
<svg class="a" style="left:9px;top:450px;" width="12" height="12" viewBox="0 0 12 12"><rect x="0.5" y="0.5" width="11" height="11" fill="none" stroke="#ddd"/><path d="M0.5 3H11.5" stroke="#ddd"/><rect x="3" y="5" width="4" height="2" fill="#ddd"/><rect x="5" y="7" width="4" height="2" fill="#ddd"/></svg>
<div class="a" style="left:28px;top:447px;width:23px;height:18px;background:#2f2f2f;"></div>
<svg class="a" style="left:33px;top:450px;" width="14" height="12" viewBox="0 0 14 12"><rect x="0.5" y="0.5" width="13" height="11" fill="none" stroke="#ccc"/><path d="M0.5 3H13.5" stroke="#ccc"/><path d="M13 10V12H11Z" fill="#ddd"/></svg>
<div class="a" style="left:57px;top:101px;width:718px;height:17px;background:#1b1b1b;"></div>
<div class="a" style="left:57px;top:101px;width:16px;height:602px;background:#1b1b1b;"></div>
<div class="a" style="left:73px;top:117px;width:702px;height:1px;background:#9a9a9a;"></div>
<svg class="a" style="left:58px;top:104px;" width="15" height="13" viewBox="0 0 15 13"><path d="M1 4.5H14" stroke="#bbb" stroke-dasharray="1 1"/><path d="M5.5 1V13" stroke="#bbb" stroke-dasharray="1 1"/></svg>
<svg class="a" style="left:73px;top:101px;" width="702" height="17" viewBox="0 0 702 17"><path d="M1.5 13V16" stroke="#8e8e8e" stroke-width="1"/><path d="M7.5 13V16" stroke="#8e8e8e" stroke-width="1"/><path d="M12.5 13V16" stroke="#8e8e8e" stroke-width="1"/><path d="M17.5 13V16" stroke="#8e8e8e" stroke-width="1"/><path d="M23.5 10V16" stroke="#a4a4a4" stroke-width="1"/><path d="M28.5 13V16" stroke="#8e8e8e" stroke-width="1"/><path d="M33.5 13V16" stroke="#8e8e8e" stroke-width="1"/><path d="M38.5 13V16" stroke="#8e8e8e" stroke-width="1"/><path d="M44.5 13V16" stroke="#8e8e8e" stroke-width="1"/><path d="M49.5 0V16" stroke="#c8c8c8" stroke-width="1"/><path d="M54.5 13V16" stroke="#8e8e8e" stroke-width="1"/><path d="M60.5 13V16" stroke="#8e8e8e" stroke-width="1"/><path d="M65.5 13V16" stroke="#8e8e8e" stroke-width="1"/><path d="M70.5 13V16" stroke="#8e8e8e" stroke-width="1"/><path d="M76.5 10V16" stroke="#a4a4a4" stroke-width="1"/><path d="M81.5 13V16" stroke="#8e8e8e" stroke-width="1"/><path d="M86.5 13V16" stroke="#8e8e8e" stroke-width="1"/><path d="M92.5 13V16" stroke="#8e8e8e" stroke-width="1"/><path d="M97.5 13V16" stroke="#8e8e8e" stroke-width="1"/><path d="M102.5 0V16" stroke="#c8c8c8" stroke-width="1"/><path d="M108.5 13V16" stroke="#8e8e8e" stroke-width="1"/><path d="M113.5 13V16" stroke="#8e8e8e" stroke-width="1"/><path d="M118.5 13V16" stroke="#8e8e8e" stroke-width="1"/><path d="M124.5 13V16" stroke="#8e8e8e" stroke-width="1"/><path d="M129.5 10V16" stroke="#a4a4a4" stroke-width="1"/><path d="M134.5 13V16" stroke="#8e8e8e" stroke-width="1"/><path d="M140.5 13V16" stroke="#8e8e8e" stroke-width="1"/><path d="M145.5 13V16" stroke="#8e8e8e" stroke-width="1"/><path d="M150.5 13V16" stroke="#8e8e8e" stroke-width="1"/><path d="M155.5 0V16" stroke="#c8c8c8" stroke-width="1"/><path d="M161.5 13V16" stroke="#8e8e8e" stroke-width="1"/><path d="M166.5 13V16" stroke="#8e8e8e" stroke-width="1"/><path d="M171.5 13V16" stroke="#8e8e8e" stroke-width="1"/><path d="M177.5 13V16" stroke="#8e8e8e" stroke-width="1"/><path d="M182.5 10V16" stroke="#a4a4a4" stroke-width="1"/><path d="M187.5 13V16" stroke="#8e8e8e" stroke-width="1"/><path d="M193.5 13V16" stroke="#8e8e8e" stroke-width="1"/><path d="M198.5 13V16" stroke="#8e8e8e" stroke-width="1"/><path d="M203.5 13V16" stroke="#8e8e8e" stroke-width="1"/><path d="M209.5 0V16" stroke="#c8c8c8" stroke-width="1"/><path d="M214.5 13V16" stroke="#8e8e8e" stroke-width="1"/><path d="M219.5 13V16" stroke="#8e8e8e" stroke-width="1"/><path d="M225.5 13V16" stroke="#8e8e8e" stroke-width="1"/><path d="M230.5 13V16" stroke="#8e8e8e" stroke-width="1"/><path d="M235.5 10V16" stroke="#a4a4a4" stroke-width="1"/><path d="M241.5 13V16" stroke="#8e8e8e" stroke-width="1"/><path d="M246.5 13V16" stroke="#8e8e8e" stroke-width="1"/><path d="M251.5 13V16" stroke="#8e8e8e" stroke-width="1"/><path d="M257.5 13V16" stroke="#8e8e8e" stroke-width="1"/><path d="M262.5 0V16" stroke="#c8c8c8" stroke-width="1"/><path d="M267.5 13V16" stroke="#8e8e8e" stroke-width="1"/><path d="M273.5 13V16" stroke="#8e8e8e" stroke-width="1"/><path d="M278.5 13V16" stroke="#8e8e8e" stroke-width="1"/><path d="M283.5 13V16" stroke="#8e8e8e" stroke-width="1"/><path d="M289.5 10V16" stroke="#a4a4a4" stroke-width="1"/><path d="M294.5 13V16" stroke="#8e8e8e" stroke-width="1"/><path d="M299.5 13V16" stroke="#8e8e8e" stroke-width="1"/><path d="M304.5 13V16" stroke="#8e8e8e" stroke-width="1"/><path d="M310.5 13V16" stroke="#8e8e8e" stroke-width="1"/><path d="M315.5 0V16" stroke="#c8c8c8" stroke-width="1"/><path d="M320.5 13V16" stroke="#8e8e8e" stroke-width="1"/><path d="M326.5 13V16" stroke="#8e8e8e" stroke-width="1"/><path d="M331.5 13V16" stroke="#8e8e8e" stroke-width="1"/><path d="M336.5 13V16" stroke="#8e8e8e" stroke-width="1"/><path d="M342.5 10V16" stroke="#a4a4a4" stroke-width="1"/><path d="M347.5 13V16" stroke="#8e8e8e" stroke-width="1"/><path d="M352.5 13V16" stroke="#8e8e8e" stroke-width="1"/><path d="M358.5 13V16" stroke="#8e8e8e" stroke-width="1"/><path d="M363.5 13V16" stroke="#8e8e8e" stroke-width="1"/><path d="M368.5 0V16" stroke="#c8c8c8" stroke-width="1"/><path d="M374.5 13V16" stroke="#8e8e8e" stroke-width="1"/><path d="M379.5 13V16" stroke="#8e8e8e" stroke-width="1"/><path d="M384.5 13V16" stroke="#8e8e8e" stroke-width="1"/><path d="M390.5 13V16" stroke="#8e8e8e" stroke-width="1"/><path d="M395.5 10V16" stroke="#a4a4a4" stroke-width="1"/><path d="M400.5 13V16" stroke="#8e8e8e" stroke-width="1"/><path d="M406.5 13V16" stroke="#8e8e8e" stroke-width="1"/><path d="M411.5 13V16" stroke="#8e8e8e" stroke-width="1"/><path d="M416.5 13V16" stroke="#8e8e8e" stroke-width="1"/><path d="M421.5 0V16" stroke="#c8c8c8" stroke-width="1"/><path d="M427.5 13V16" stroke="#8e8e8e" stroke-width="1"/><path d="M432.5 13V16" stroke="#8e8e8e" stroke-width="1"/><path d="M437.5 13V16" stroke="#8e8e8e" stroke-width="1"/><path d="M443.5 13V16" stroke="#8e8e8e" stroke-width="1"/><path d="M448.5 10V16" stroke="#a4a4a4" stroke-width="1"/><path d="M453.5 13V16" stroke="#8e8e8e" stroke-width="1"/><path d="M459.5 13V16" stroke="#8e8e8e" stroke-width="1"/><path d="M464.5 13V16" stroke="#8e8e8e" stroke-width="1"/><path d="M469.5 13V16" stroke="#8e8e8e" stroke-width="1"/><path d="M475.5 0V16" stroke="#c8c8c8" stroke-width="1"/><path d="M480.5 13V16" stroke="#8e8e8e" stroke-width="1"/><path d="M485.5 13V16" stroke="#8e8e8e" stroke-width="1"/><path d="M491.5 13V16" stroke="#8e8e8e" stroke-width="1"/><path d="M496.5 13V16" stroke="#8e8e8e" stroke-width="1"/><path d="M501.5 10V16" stroke="#a4a4a4" stroke-width="1"/><path d="M507.5 13V16" stroke="#8e8e8e" stroke-width="1"/><path d="M512.5 13V16" stroke="#8e8e8e" stroke-width="1"/><path d="M517.5 13V16" stroke="#8e8e8e" stroke-width="1"/><path d="M523.5 13V16" stroke="#8e8e8e" stroke-width="1"/><path d="M528.5 0V16" stroke="#c8c8c8" stroke-width="1"/><path d="M533.5 13V16" stroke="#8e8e8e" stroke-width="1"/><path d="M539.5 13V16" stroke="#8e8e8e" stroke-width="1"/><path d="M544.5 13V16" stroke="#8e8e8e" stroke-width="1"/><path d="M549.5 13V16" stroke="#8e8e8e" stroke-width="1"/><path d="M555.5 10V16" stroke="#a4a4a4" stroke-width="1"/><path d="M560.5 13V16" stroke="#8e8e8e" stroke-width="1"/><path d="M565.5 13V16" stroke="#8e8e8e" stroke-width="1"/><path d="M570.5 13V16" stroke="#8e8e8e" stroke-width="1"/><path d="M576.5 13V16" stroke="#8e8e8e" stroke-width="1"/><path d="M581.5 0V16" stroke="#c8c8c8" stroke-width="1"/><path d="M586.5 13V16" stroke="#8e8e8e" stroke-width="1"/><path d="M592.5 13V16" stroke="#8e8e8e" stroke-width="1"/><path d="M597.5 13V16" stroke="#8e8e8e" stroke-width="1"/><path d="M602.5 13V16" stroke="#8e8e8e" stroke-width="1"/><path d="M608.5 10V16" stroke="#a4a4a4" stroke-width="1"/><path d="M613.5 13V16" stroke="#8e8e8e" stroke-width="1"/><path d="M618.5 13V16" stroke="#8e8e8e" stroke-width="1"/><path d="M624.5 13V16" stroke="#8e8e8e" stroke-width="1"/><path d="M629.5 13V16" stroke="#8e8e8e" stroke-width="1"/><path d="M634.5 0V16" stroke="#c8c8c8" stroke-width="1"/><path d="M640.5 13V16" stroke="#8e8e8e" stroke-width="1"/><path d="M645.5 13V16" stroke="#8e8e8e" stroke-width="1"/><path d="M650.5 13V16" stroke="#8e8e8e" stroke-width="1"/><path d="M656.5 13V16" stroke="#8e8e8e" stroke-width="1"/><path d="M661.5 10V16" stroke="#a4a4a4" stroke-width="1"/><path d="M666.5 13V16" stroke="#8e8e8e" stroke-width="1"/><path d="M672.5 13V16" stroke="#8e8e8e" stroke-width="1"/><path d="M677.5 13V16" stroke="#8e8e8e" stroke-width="1"/><path d="M682.5 13V16" stroke="#8e8e8e" stroke-width="1"/><path d="M687.5 0V16" stroke="#c8c8c8" stroke-width="1"/><path d="M693.5 13V16" stroke="#8e8e8e" stroke-width="1"/><path d="M698.5 13V16" stroke="#8e8e8e" stroke-width="1"/></svg>
<div class="t" style="left:75px;top:103px;font-size:9px;color:#e0e0e0;font-weight:normal;">40</div>
<div class="t" style="left:124px;top:103px;font-size:9px;color:#e0e0e0;font-weight:normal;">120</div>
<div class="t" style="left:177px;top:103px;font-size:9px;color:#e0e0e0;font-weight:normal;">100</div>
<div class="t" style="left:230px;top:103px;font-size:9px;color:#e0e0e0;font-weight:normal;">80</div>
<div class="t" style="left:284px;top:103px;font-size:9px;color:#e0e0e0;font-weight:normal;">60</div>
<div class="t" style="left:337px;top:103px;font-size:9px;color:#e0e0e0;font-weight:normal;">40</div>
<div class="t" style="left:390px;top:103px;font-size:9px;color:#e0e0e0;font-weight:normal;">20</div>
<div class="t" style="left:443px;top:103px;font-size:9px;color:#e0e0e0;font-weight:normal;">0</div>
<div class="t" style="left:496px;top:103px;font-size:9px;color:#e0e0e0;font-weight:normal;">20</div>
<div class="t" style="left:550px;top:103px;font-size:9px;color:#e0e0e0;font-weight:normal;">40</div>
<div class="t" style="left:603px;top:103px;font-size:9px;color:#e0e0e0;font-weight:normal;">60</div>
<div class="t" style="left:656px;top:103px;font-size:9px;color:#e0e0e0;font-weight:normal;">80</div>
<div class="t" style="left:709px;top:103px;font-size:9px;color:#e0e0e0;font-weight:normal;">100</div>
<div class="t" style="left:762px;top:103px;font-size:9px;color:#e0e0e0;font-weight:normal;">120</div>
<svg class="a" style="left:57px;top:118px;" width="16" height="585" viewBox="0 0 16 585"><path d="M13 3.5H16" stroke="#8e8e8e"/><path d="M13 8.5H16" stroke="#8e8e8e"/><path d="M1 14.5H16" stroke="#c8c8c8"/><path d="M13 19.5H16" stroke="#8e8e8e"/><path d="M13 24.5H16" stroke="#8e8e8e"/><path d="M13 30.5H16" stroke="#8e8e8e"/><path d="M13 35.5H16" stroke="#8e8e8e"/><path d="M10 40.5H16" stroke="#a4a4a4"/><path d="M13 46.5H16" stroke="#8e8e8e"/><path d="M13 51.5H16" stroke="#8e8e8e"/><path d="M13 56.5H16" stroke="#8e8e8e"/><path d="M13 61.5H16" stroke="#8e8e8e"/><path d="M1 67.5H16" stroke="#c8c8c8"/><path d="M13 72.5H16" stroke="#8e8e8e"/><path d="M13 77.5H16" stroke="#8e8e8e"/><path d="M13 83.5H16" stroke="#8e8e8e"/><path d="M13 88.5H16" stroke="#8e8e8e"/><path d="M10 93.5H16" stroke="#a4a4a4"/><path d="M13 99.5H16" stroke="#8e8e8e"/><path d="M13 104.5H16" stroke="#8e8e8e"/><path d="M13 109.5H16" stroke="#8e8e8e"/><path d="M13 115.5H16" stroke="#8e8e8e"/><path d="M1 120.5H16" stroke="#c8c8c8"/><path d="M13 125.5H16" stroke="#8e8e8e"/><path d="M13 131.5H16" stroke="#8e8e8e"/><path d="M13 136.5H16" stroke="#8e8e8e"/><path d="M13 141.5H16" stroke="#8e8e8e"/><path d="M10 147.5H16" stroke="#a4a4a4"/><path d="M13 152.5H16" stroke="#8e8e8e"/><path d="M13 157.5H16" stroke="#8e8e8e"/><path d="M13 163.5H16" stroke="#8e8e8e"/><path d="M13 168.5H16" stroke="#8e8e8e"/><path d="M1 173.5H16" stroke="#c8c8c8"/><path d="M13 179.5H16" stroke="#8e8e8e"/><path d="M13 184.5H16" stroke="#8e8e8e"/><path d="M13 189.5H16" stroke="#8e8e8e"/><path d="M13 194.5H16" stroke="#8e8e8e"/><path d="M10 200.5H16" stroke="#a4a4a4"/><path d="M13 205.5H16" stroke="#8e8e8e"/><path d="M13 210.5H16" stroke="#8e8e8e"/><path d="M13 216.5H16" stroke="#8e8e8e"/><path d="M13 221.5H16" stroke="#8e8e8e"/><path d="M1 226.5H16" stroke="#c8c8c8"/><path d="M13 232.5H16" stroke="#8e8e8e"/><path d="M13 237.5H16" stroke="#8e8e8e"/><path d="M13 242.5H16" stroke="#8e8e8e"/><path d="M13 248.5H16" stroke="#8e8e8e"/><path d="M10 253.5H16" stroke="#a4a4a4"/><path d="M13 258.5H16" stroke="#8e8e8e"/><path d="M13 264.5H16" stroke="#8e8e8e"/><path d="M13 269.5H16" stroke="#8e8e8e"/><path d="M13 274.5H16" stroke="#8e8e8e"/><path d="M1 280.5H16" stroke="#c8c8c8"/><path d="M13 285.5H16" stroke="#8e8e8e"/><path d="M13 290.5H16" stroke="#8e8e8e"/><path d="M13 296.5H16" stroke="#8e8e8e"/><path d="M13 301.5H16" stroke="#8e8e8e"/><path d="M10 306.5H16" stroke="#a4a4a4"/><path d="M13 312.5H16" stroke="#8e8e8e"/><path d="M13 317.5H16" stroke="#8e8e8e"/><path d="M13 322.5H16" stroke="#8e8e8e"/><path d="M13 327.5H16" stroke="#8e8e8e"/><path d="M1 333.5H16" stroke="#c8c8c8"/><path d="M13 338.5H16" stroke="#8e8e8e"/><path d="M13 343.5H16" stroke="#8e8e8e"/><path d="M13 349.5H16" stroke="#8e8e8e"/><path d="M13 354.5H16" stroke="#8e8e8e"/><path d="M10 359.5H16" stroke="#a4a4a4"/><path d="M13 365.5H16" stroke="#8e8e8e"/><path d="M13 370.5H16" stroke="#8e8e8e"/><path d="M13 375.5H16" stroke="#8e8e8e"/><path d="M13 381.5H16" stroke="#8e8e8e"/><path d="M1 386.5H16" stroke="#c8c8c8"/><path d="M13 391.5H16" stroke="#8e8e8e"/><path d="M13 397.5H16" stroke="#8e8e8e"/><path d="M13 402.5H16" stroke="#8e8e8e"/><path d="M13 407.5H16" stroke="#8e8e8e"/><path d="M10 413.5H16" stroke="#a4a4a4"/><path d="M13 418.5H16" stroke="#8e8e8e"/><path d="M13 423.5H16" stroke="#8e8e8e"/><path d="M13 429.5H16" stroke="#8e8e8e"/><path d="M13 434.5H16" stroke="#8e8e8e"/><path d="M1 439.5H16" stroke="#c8c8c8"/><path d="M13 445.5H16" stroke="#8e8e8e"/><path d="M13 450.5H16" stroke="#8e8e8e"/><path d="M13 455.5H16" stroke="#8e8e8e"/><path d="M13 460.5H16" stroke="#8e8e8e"/><path d="M10 466.5H16" stroke="#a4a4a4"/><path d="M13 471.5H16" stroke="#8e8e8e"/><path d="M13 476.5H16" stroke="#8e8e8e"/><path d="M13 482.5H16" stroke="#8e8e8e"/><path d="M13 487.5H16" stroke="#8e8e8e"/><path d="M1 492.5H16" stroke="#c8c8c8"/><path d="M13 498.5H16" stroke="#8e8e8e"/><path d="M13 503.5H16" stroke="#8e8e8e"/><path d="M13 508.5H16" stroke="#8e8e8e"/><path d="M13 514.5H16" stroke="#8e8e8e"/><path d="M10 519.5H16" stroke="#a4a4a4"/><path d="M13 524.5H16" stroke="#8e8e8e"/><path d="M13 530.5H16" stroke="#8e8e8e"/><path d="M13 535.5H16" stroke="#8e8e8e"/><path d="M13 540.5H16" stroke="#8e8e8e"/><path d="M1 546.5H16" stroke="#c8c8c8"/><path d="M13 551.5H16" stroke="#8e8e8e"/><path d="M13 556.5H16" stroke="#8e8e8e"/><path d="M13 562.5H16" stroke="#8e8e8e"/><path d="M13 567.5H16" stroke="#8e8e8e"/><path d="M10 572.5H16" stroke="#a4a4a4"/><path d="M13 578.5H16" stroke="#8e8e8e"/><path d="M13 583.5H16" stroke="#8e8e8e"/></svg>
<div class="t" style="left:60px;top:133.5px;font-size:9px;color:#dcdcdc;font-weight:normal;">0</div>
<div class="t" style="left:60px;top:186.5px;font-size:9px;color:#dcdcdc;font-weight:normal;">2</div>
<div class="t" style="left:60px;top:194.3px;font-size:9px;color:#dcdcdc;font-weight:normal;">0</div>
<div class="t" style="left:60px;top:239.5px;font-size:9px;color:#dcdcdc;font-weight:normal;">4</div>
<div class="t" style="left:60px;top:247.3px;font-size:9px;color:#dcdcdc;font-weight:normal;">0</div>
<div class="t" style="left:60px;top:292.5px;font-size:9px;color:#dcdcdc;font-weight:normal;">6</div>
<div class="t" style="left:60px;top:300.3px;font-size:9px;color:#dcdcdc;font-weight:normal;">0</div>
<div class="t" style="left:60px;top:345.5px;font-size:9px;color:#dcdcdc;font-weight:normal;">8</div>
<div class="t" style="left:60px;top:353.3px;font-size:9px;color:#dcdcdc;font-weight:normal;">0</div>
<div class="t" style="left:60px;top:399.5px;font-size:9px;color:#dcdcdc;font-weight:normal;">1</div>
<div class="t" style="left:60px;top:407.3px;font-size:9px;color:#dcdcdc;font-weight:normal;">0</div>
<div class="t" style="left:60px;top:415.1px;font-size:9px;color:#dcdcdc;font-weight:normal;">0</div>
<div class="t" style="left:60px;top:452.5px;font-size:9px;color:#dcdcdc;font-weight:normal;">1</div>
<div class="t" style="left:60px;top:460.3px;font-size:9px;color:#dcdcdc;font-weight:normal;">2</div>
<div class="t" style="left:60px;top:468.1px;font-size:9px;color:#dcdcdc;font-weight:normal;">0</div>
<div class="t" style="left:60px;top:505.5px;font-size:9px;color:#dcdcdc;font-weight:normal;">1</div>
<div class="t" style="left:60px;top:513.3px;font-size:9px;color:#dcdcdc;font-weight:normal;">4</div>
<div class="t" style="left:60px;top:521.1px;font-size:9px;color:#dcdcdc;font-weight:normal;">0</div>
<div class="t" style="left:60px;top:558.5px;font-size:9px;color:#dcdcdc;font-weight:normal;">1</div>
<div class="t" style="left:60px;top:566.3px;font-size:9px;color:#dcdcdc;font-weight:normal;">6</div>
<div class="t" style="left:60px;top:574.1px;font-size:9px;color:#dcdcdc;font-weight:normal;">0</div>
<div class="t" style="left:60px;top:611.5px;font-size:9px;color:#dcdcdc;font-weight:normal;">1</div>
<div class="t" style="left:60px;top:619.3px;font-size:9px;color:#dcdcdc;font-weight:normal;">8</div>
<div class="t" style="left:60px;top:627.1px;font-size:9px;color:#dcdcdc;font-weight:normal;">0</div>
<div class="t" style="left:60px;top:665.5px;font-size:9px;color:#dcdcdc;font-weight:normal;">2</div>
<div class="t" style="left:60px;top:673.3px;font-size:9px;color:#dcdcdc;font-weight:normal;">0</div>
<div class="t" style="left:60px;top:681.1px;font-size:9px;color:#dcdcdc;font-weight:normal;">0</div>
<svg class="a" style="left:58px;top:152px;" width="15" height="2" viewBox="0 0 15 2"><path d="M0 1H15" stroke="#eee" stroke-dasharray="1 1"/></svg>
<div class="a" style="left:73px;top:118px;width:702px;height:585px;background:#b8b8b8;"></div>
<div class="a" style="left:775px;top:101px;width:1px;height:615px;background:#1a1a1a;"></div>
<div class="a" style="left:441px;top:131px;width:281px;height:561px;background:#000;"></div>
<div class="a" style="left:442px;top:132px;width:278px;height:558px;background:#ededed;"></div>
<div class="a" style="left:443px;top:691px;width:1px;height:2px;background:#ccc;"></div>
<div class="a" style="left:57px;top:703px;width:718px;height:13px;background:#2f2f2f;"></div>
<div class="a" style="left:73px;top:703px;width:458px;height:13px;background:#3d3d3d;"></div>
<div class="a" style="left:57px;top:703px;width:16px;height:13px;background:#383838;"></div>
<div class="a" style="left:75px;top:705px;width:19px;height:11px;background:#b4b4b4;"></div>
<svg class="a" style="left:76px;top:706px;" width="18" height="10" viewBox="0 0 18 10"><circle cx="5" cy="5" r="3.3" fill="#2a2a2a"/><path d="M5 0.5V9.5M0.5 5H9.5M1.8 1.8L8.2 8.2M8.2 1.8L1.8 8.2" stroke="#2a2a2a" stroke-width="1.6"/><circle cx="5" cy="5" r="1.2" fill="#b4b4b4"/><path d="M11 2L14 5L11 8M14 5L17 8" stroke="#2a2a2a" stroke-width="1.5" fill="none"/></svg>
<svg class="a" style="left:102px;top:704px;" width="13" height="12" viewBox="0 0 13 12"><path d="M0.5 4V11.5H10V8" stroke="#ddd" fill="none"/><path d="M3 8Q4 3 9 3V1L12.5 4L9 7V5Q6 5 3 8Z" fill="#ddd"/></svg>
<svg class="a" style="left:125px;top:706px;" width="8" height="9" viewBox="0 0 8 9"><path d="M0.5 0V9" stroke="#aaa"/><path d="M7 0L2 4.5L7 9Z" fill="#aaa"/></svg>
<svg class="a" style="left:139px;top:706px;" width="6" height="9" viewBox="0 0 6 9"><path d="M6 0L0 4.5L6 9Z" fill="#aaa"/></svg>
<div class="t" style="left:154.5px;top:705.3px;font-size:10.5px;color:#e0e0e0;font-weight:normal;">2</div>
<svg class="a" style="left:236px;top:707px;" width="9" height="6" viewBox="0 0 9 6"><path d="M0 0H9L4.5 6Z" fill="#ddd"/></svg>
<svg class="a" style="left:256px;top:706px;" width="6" height="9" viewBox="0 0 6 9"><path d="M0 0L6 4.5L0 9Z" fill="#666"/></svg>
<svg class="a" style="left:269px;top:706px;" width="8" height="9" viewBox="0 0 8 9"><path d="M0 0L5 4.5L0 9Z" fill="#666"/><path d="M7.5 0V9" stroke="#666"/></svg>
<svg class="a" style="left:284px;top:704px;" width="13" height="12" viewBox="0 0 13 12"><circle cx="6.5" cy="6.5" r="6" fill="#eee"/><path d="M3.5 2.5H7.5L10 5V11H3.5Z" fill="#333"/><path d="M4.5 3.5H7L9 5.5V10H4.5Z" fill="#eee"/></svg>
<div class="t" style="left:310px;top:706.5px;font-size:9.2px;color:#e0e0e0;font-weight:normal;">[Grundprofil] (Arbeits...</div>
<svg class="a" style="left:415px;top:708px;" width="7" height="5" viewBox="0 0 7 5"><path d="M0 0H7L3.5 5Z" fill="#ddd"/></svg>
<svg class="a" style="left:429px;top:704px;" width="12" height="12" viewBox="0 0 12 12"><circle cx="6" cy="6" r="5.5" fill="#8a8a8a"/></svg>
<div class="t" style="left:444px;top:706.5px;font-size:9.2px;color:#dcdcdc;font-weight:normal;">&#220;berpr&#252;fen</div>
<svg class="a" style="left:516px;top:709px;" width="6" height="4" viewBox="0 0 6 4"><path d="M0 0H6L3 4Z" fill="#ddd"/></svg>
<svg class="a" style="left:529px;top:705px;" width="7" height="10" viewBox="0 0 7 10"><path d="M7 0L0 5L7 10Z" fill="#777"/></svg>
<div class="a" style="left:776px;top:81px;width:500px;height:14px;background:#2d2d2d;"></div>
<div class="a" style="left:776px;top:81px;width:500px;height:1px;background:#1f1f1f;"></div>
<div class="a" style="left:776px;top:93px;width:330px;height:1px;background:#1f1f1f;"></div>
<div class="a" style="left:776px;top:95px;width:329px;height:17px;background:#323232;"></div>
<div class="a" style="left:776px;top:95px;width:49px;height:17px;background:#484848;"></div>
<svg class="a" style="left:780px;top:99px;" width="6" height="10" viewBox="0 0 6 10"><path d="M0.5 4L3 1L5.5 4M0.5 6L3 9L5.5 6" stroke="#e0e0e0" fill="none" stroke-width="1.1"/></svg>
<div class="t" style="left:789px;top:98.5px;font-size:10px;color:#f0f0f0;font-weight:bold;">Seiten</div>
<div class="a" style="left:825px;top:95px;width:1px;height:17px;background:#2a2a2a;"></div>
<div class="t" style="left:832px;top:98.5px;font-size:10px;color:#8e8e8e;font-weight:bold;letter-spacing:-0.5px">Ebenen</div>
<div class="a" style="left:872px;top:95px;width:1px;height:17px;background:#2a2a2a;"></div>
<div class="t" style="left:880px;top:98.5px;font-size:10px;color:#8e8e8e;font-weight:bold;letter-spacing:-0.1px">Verkn&#252;pfungen</div>
<div class="a" style="left:959px;top:95px;width:1px;height:17px;background:#2a2a2a;"></div>
<svg class="a" style="left:1064px;top:101px;" width="10" height="6" viewBox="0 0 10 6"><path d="M0 0L4.5 3L0 6ZM5 0L9.5 3L5 6Z" fill="#cfcfcf"/></svg>
<div class="a" style="left:1080px;top:97px;width:1px;height:13px;background:#2a2a2a;"></div>
<div class="a" style="left:1081px;top:97px;width:1px;height:13px;background:#4a4a4a;"></div>
<svg class="a" style="left:1086px;top:99px;" width="15" height="9" viewBox="0 0 15 9"><path d="M0 2H5L2.5 5Z" fill="#ddd"/><path d="M6 1H15M6 4H15M6 7H15" stroke="#ddd" stroke-width="1.1"/></svg>
<div class="a" style="left:776px;top:112px;width:329px;height:567px;background:#464646;"></div>
<div class="t" style="left:779px;top:127px;font-size:9px;color:#d8d8d8;font-weight:normal;letter-spacing:0px">[Ohne]</div>
<div class="t" style="left:779px;top:156px;font-size:9px;color:#d8d8d8;font-weight:normal;letter-spacing:-0.15px">A-Musterseite</div>
<div class="a" style="left:1070px;top:116px;width:13px;height:23px;background:#f0f0f0;"></div>
<div class="a" style="left:1070px;top:145px;width:13px;height:24px;background:#f0f0f0;"></div>
<div class="a" style="left:1090px;top:112px;width:15px;height:170px;background:#393939;"></div>
<div class="a" style="left:1090px;top:112px;width:1px;height:170px;background:#404040;"></div>
<svg class="a" style="left:1093px;top:118px;" width="9" height="5" viewBox="0 0 9 5"><path d="M0 4L4.5 0L9 4Z" fill="#777"/></svg>
<svg class="a" style="left:1093px;top:276px;" width="9" height="5" viewBox="0 0 9 5"><path d="M0 0L4.5 4L9 0Z" fill="#777"/></svg>
<div class="a" style="left:776px;top:282px;width:329px;height:1px;background:#3a3a3a;"></div>
<div class="a" style="left:776px;top:285px;width:329px;height:1px;background:#606060;"></div>
<div class="a" style="left:776px;top:288px;width:329px;height:2px;background:#3c3c3c;"></div>
<div class="a" style="left:1090px;top:290px;width:15px;height:389px;background:#393939;"></div>
<svg class="a" style="left:1093px;top:295px;" width="9" height="5" viewBox="0 0 9 5"><path d="M0 4L4.5 0L9 4Z" fill="#777"/></svg>
<svg class="a" style="left:1093px;top:665px;" width="9" height="5" viewBox="0 0 9 5"><path d="M0 0L4.5 4L9 0Z" fill="#666"/></svg>
<svg class="a" style="left:796px;top:292px;" width="8" height="4" viewBox="0 0 8 4"><path d="M0 0H8L4 4Z" fill="#8a8a8a"/></svg>
<div class="a" style="left:792px;top:297px;width:18px;height:38px;background:#0c0c0c;"></div>
<svg class="a" style="left:792px;top:297px;" width="18" height="38" viewBox="0 0 18 38"><rect x="0" y="0" width="4" height="38" fill="#2a2016"/><path d="M1 5V35" stroke="#d4aa70" stroke-width="2" stroke-dasharray="3 1.5"/><path d="M12 6Q17 12 14 19Q18 27 15 38H18V4H13Z" fill="#d8d8d8"/><path d="M15 8L16 10M14 22L17 25M15 30L17 33" stroke="#888" stroke-width="1"/><path d="M4 12Q8 9 11 12L13 22Q12 30 14 38H4Z" fill="#000"/><rect x="4" y="0" width="14" height="1" fill="#bbb"/></svg>
<div class="a" style="left:797px;top:298px;width:11px;height:10px;background:#f0f0f0;"></div>
<div class="t" style="left:798.5px;top:299.5px;font-size:9px;color:#111;font-weight:bold;">A</div>
<div class="t" style="left:797px;top:341px;font-size:9px;color:#d8d8d8;font-weight:normal;">1</div>
<div class="a" style="left:792px;top:361px;width:19px;height:37px;background:#b4b4b8;"></div>
<div class="a" style="left:796px;top:362px;width:13px;height:10px;background:#f2f2f2;"></div>
<div class="t" style="left:798.5px;top:363px;font-size:9px;color:#111;font-weight:bold;">A</div>
<div class="a" style="left:793px;top:402px;width:13px;height:12px;background:#2f3a55;"></div>
<div class="t" style="left:796.5px;top:403px;font-size:10px;color:#f4f4f4;font-weight:bold;">2</div>
<div class="a" style="left:776px;top:678px;width:329px;height:1px;background:#383838;"></div>
<div class="a" style="left:776px;top:679px;width:329px;height:21px;background:#474747;"></div>
<div class="a" style="left:776px;top:679px;width:329px;height:1px;background:#545454;"></div>
<div class="t" style="left:779px;top:684.5px;font-size:9px;color:#dcdcdc;font-weight:normal;">2 Seiten auf 2 Druckb&#246;gen</div>
<svg class="a" style="left:1002px;top:683px;" width="19" height="14" viewBox="0 0 19 14"><rect x="0" y="6" width="9" height="8" fill="#ddd"/><rect x="7" y="1" width="8" height="9" fill="#ccc" stroke="#333" stroke-width="0.7"/><path d="M8 3H13M8 5H13" stroke="#666"/><path d="M17 12H19L18 13.5Z" fill="#ddd"/><rect x="10" y="8" width="6" height="6" fill="#ddd"/></svg>
<svg class="a" style="left:1034px;top:683px;" width="14" height="14" viewBox="0 0 14 14"><path d="M1 1H13V13H7V7H1Z" fill="#e0e0e0"/><path d="M1 7H7V13Z" fill="#555"/></svg>
<svg class="a" style="left:1065px;top:683px;" width="13" height="14" viewBox="0 0 13 14"><rect x="0" y="2" width="13" height="2" fill="#ddd"/><rect x="4" y="0" width="5" height="2" fill="#ddd"/><path d="M1.5 5H11.5L10.5 14H2.5Z" fill="#ddd"/><path d="M4.5 6V13M6.5 6V13M8.5 6V13" stroke="#555" stroke-width="0.9"/></svg>
<div class="a" style="left:776px;top:700px;width:329px;height:8px;background:#3f3f3f;"></div>
<div class="a" style="left:776px;top:700px;width:329px;height:1px;background:#2a2a2a;"></div>
<div class="a" style="left:929px;top:702px;width:1px;height:4px;background:#111;"></div>
<div class="a" style="left:931px;top:702px;width:1px;height:4px;background:#111;"></div>
<div class="a" style="left:933px;top:702px;width:1px;height:4px;background:#111;"></div>
<div class="a" style="left:935px;top:702px;width:1px;height:4px;background:#111;"></div>
<div class="a" style="left:937px;top:702px;width:1px;height:4px;background:#111;"></div>
<div class="a" style="left:939px;top:702px;width:1px;height:4px;background:#111;"></div>
<div class="a" style="left:941px;top:702px;width:1px;height:4px;background:#111;"></div>
<div class="a" style="left:943px;top:702px;width:1px;height:4px;background:#111;"></div>
<div class="a" style="left:945px;top:702px;width:1px;height:4px;background:#111;"></div>
<div class="a" style="left:947px;top:702px;width:1px;height:4px;background:#111;"></div>
<div class="a" style="left:776px;top:708px;width:330px;height:8px;background:#2c2c2c;"></div>
<svg class="a" style="left:1060px;top:707px;" width="45" height="9" viewBox="0 0 45 9"><path d="M0 1V8L6 5Z" fill="#5a5a5a"/><path d="M20 0V9M26 0V9M32 0V9" stroke="#777"/></svg>
<div class="a" style="left:1104px;top:81px;width:2px;height:635px;background:#262626;"></div>
<div class="a" style="left:1106px;top:93px;width:170px;height:623px;background:#474747;"></div>
<svg class="a" style="left:1265px;top:85px;" width="10" height="7" viewBox="0 0 10 7"><path d="M4.5 0L0 3.5L4.5 7ZM10 0L5.5 3.5L10 7Z" fill="#d0d0d0"/></svg>
<div class="a" style="left:1182px;top:97px;width:1px;height:4px;background:#111;"></div>
<div class="a" style="left:1184px;top:97px;width:1px;height:4px;background:#111;"></div>
<div class="a" style="left:1186px;top:97px;width:1px;height:4px;background:#111;"></div>
<div class="a" style="left:1188px;top:97px;width:1px;height:4px;background:#111;"></div>
<div class="a" style="left:1190px;top:97px;width:1px;height:4px;background:#111;"></div>
<div class="a" style="left:1192px;top:97px;width:1px;height:4px;background:#111;"></div>
<div class="a" style="left:1194px;top:97px;width:1px;height:4px;background:#111;"></div>
<div class="a" style="left:1196px;top:97px;width:1px;height:4px;background:#111;"></div>
<div class="a" style="left:1198px;top:97px;width:1px;height:4px;background:#111;"></div>
<div class="a" style="left:1200px;top:97px;width:1px;height:4px;background:#111;"></div>
<div class="a" style="left:1111px;top:105px;width:162px;height:24px;background:#333333;"></div>
<svg class="a" style="left:1116px;top:108px;" width="19" height="18" viewBox="0 0 19 18"><path d="M1 6L4 3H8V16H1Z" fill="#d0d0d0"/><path d="M10 3H14L17 6V16H10Z" fill="#d0d0d0"/><path d="M1 6H4V3Z" fill="#888"/><path d="M17 6H14V3Z" fill="#888"/><path d="M9 0V18" stroke="#f0f0f0" stroke-width="1"/></svg>
<div class="t" style="left:1143px;top:114.4px;font-size:10px;color:#e0e0e0;font-weight:bold;">Seiten</div>
<svg class="a" style="left:1116px;top:136px;" width="19" height="18" viewBox="0 0 19 18"><path d="M9 1L17 5L9 9L1 5Z" fill="#d8d8d8"/><path d="M1 9L9 13L17 9" stroke="#d0d0d0" stroke-width="2" fill="none"/><path d="M3 12L9 15L15 12" stroke="#c8c8c8" stroke-width="1.6" fill="none"/></svg>
<div class="t" style="left:1143px;top:142.4px;font-size:10px;color:#e0e0e0;font-weight:bold;">Ebenen</div>
<svg class="a" style="left:1116px;top:164px;" width="19" height="18" viewBox="0 0 19 18"><path d="M7 5H4A3 3 0 0 0 4 13H7M11 5H14A3 3 0 0 1 14 13H11M6 9H12" stroke="#d8d8d8" stroke-width="2" fill="none"/></svg>
<div class="t" style="left:1143px;top:170.4px;font-size:10px;color:#e0e0e0;font-weight:bold;">Verkn&#252;pfungen</div>
<div class="a" style="left:1106px;top:189px;width:170px;height:1px;background:#262626;"></div>
<div class="a" style="left:1106px;top:190px;width:170px;height:1px;background:#3c3c3c;"></div>
<div class="a" style="left:1182px;top:194px;width:1px;height:4px;background:#111;"></div>
<div class="a" style="left:1184px;top:194px;width:1px;height:4px;background:#111;"></div>
<div class="a" style="left:1186px;top:194px;width:1px;height:4px;background:#111;"></div>
<div class="a" style="left:1188px;top:194px;width:1px;height:4px;background:#111;"></div>
<div class="a" style="left:1190px;top:194px;width:1px;height:4px;background:#111;"></div>
<div class="a" style="left:1192px;top:194px;width:1px;height:4px;background:#111;"></div>
<div class="a" style="left:1194px;top:194px;width:1px;height:4px;background:#111;"></div>
<div class="a" style="left:1196px;top:194px;width:1px;height:4px;background:#111;"></div>
<div class="a" style="left:1198px;top:194px;width:1px;height:4px;background:#111;"></div>
<div class="a" style="left:1200px;top:194px;width:1px;height:4px;background:#111;"></div>
<svg class="a" style="left:1116px;top:205px;" width="19" height="18" viewBox="0 0 19 18"><path d="M1 4H18M1 9H18" stroke="#dadada" stroke-width="1.8"/><path d="M1 14H18" stroke="#cfcfcf" stroke-width="3"/></svg>
<div class="t" style="left:1143px;top:211.4px;font-size:10px;color:#e0e0e0;font-weight:bold;">Kontur</div>
<svg class="a" style="left:1116px;top:233px;" width="19" height="18" viewBox="0 0 19 18"><path d="M9 2Q17 2 17.5 8Q18 11 15 11Q12 11 13 14Q13 16 9 16Q1 16 1 9Q1 2 9 2Z" fill="#d0d0d0"/><circle cx="5" cy="9" r="1.3" fill="#555"/><circle cx="8" cy="5.5" r="1.3" fill="#555"/><circle cx="12.5" cy="5.5" r="1.3" fill="#555"/><circle cx="8" cy="12" r="1.3" fill="#555"/></svg>
<div class="t" style="left:1143px;top:239.4px;font-size:10px;color:#e0e0e0;font-weight:bold;">Farbe</div>
<svg class="a" style="left:1116px;top:261px;" width="19" height="18" viewBox="0 0 19 18"><rect x="1.5" y="3.5" width="16" height="12" fill="none" stroke="#d8d8d8" stroke-width="1.4"/><path d="M6.8 4V15M12.2 4V15M2 9.5H17" stroke="#d8d8d8" stroke-width="1.3"/></svg>
<div class="t" style="left:1143px;top:267.4px;font-size:10px;color:#e0e0e0;font-weight:bold;">Farbfelder</div>
<div class="a" style="left:1106px;top:286px;width:170px;height:1px;background:#262626;"></div>
<div class="a" style="left:1106px;top:287px;width:170px;height:1px;background:#3c3c3c;"></div>
<div class="a" style="left:1182px;top:291px;width:1px;height:4px;background:#111;"></div>
<div class="a" style="left:1184px;top:291px;width:1px;height:4px;background:#111;"></div>
<div class="a" style="left:1186px;top:291px;width:1px;height:4px;background:#111;"></div>
<div class="a" style="left:1188px;top:291px;width:1px;height:4px;background:#111;"></div>
<div class="a" style="left:1190px;top:291px;width:1px;height:4px;background:#111;"></div>
<div class="a" style="left:1192px;top:291px;width:1px;height:4px;background:#111;"></div>
<div class="a" style="left:1194px;top:291px;width:1px;height:4px;background:#111;"></div>
<div class="a" style="left:1196px;top:291px;width:1px;height:4px;background:#111;"></div>
<div class="a" style="left:1198px;top:291px;width:1px;height:4px;background:#111;"></div>
<div class="a" style="left:1200px;top:291px;width:1px;height:4px;background:#111;"></div>
<svg class="a" style="left:1116px;top:302px;" width="19" height="18" viewBox="0 0 19 18"><rect x="1.5" y="9.5" width="6" height="6" fill="none" stroke="#ddd" stroke-width="1.2"/><rect x="4.5" y="12.5" width="5" height="5" fill="none" stroke="#ccc"/><path d="M12 1A4 4 0 0 0 12 8V17M15 1V17M11 1H17" stroke="#dadada" stroke-width="1.6" fill="#dadada"/></svg>
<div class="t" style="left:1143px;top:308.4px;font-size:10px;color:#e0e0e0;font-weight:bold;">Absatzformate</div>
<svg class="a" style="left:1116px;top:330px;" width="19" height="18" viewBox="0 0 19 18"><rect x="1.5" y="9.5" width="6" height="6" fill="none" stroke="#ddd" stroke-width="1.2"/><rect x="4.5" y="12.5" width="5" height="5" fill="none" stroke="#ccc"/><path d="M8 13L12.5 1L17 13M10 9H15" stroke="#dadada" stroke-width="1.8" fill="none"/></svg>
<div class="t" style="left:1143px;top:336.4px;font-size:10px;color:#e0e0e0;font-weight:bold;">Zeichenformate</div>
<svg class="a" style="left:1116px;top:358px;" width="19" height="18" viewBox="0 0 19 18"><rect x="1.5" y="9.5" width="6" height="6" fill="none" stroke="#ddd" stroke-width="1.2"/><rect x="4.5" y="12.5" width="5" height="5" fill="none" stroke="#ccc"/><rect x="6" y="1" width="12" height="13" fill="#bbb" stroke="#ddd" stroke-dasharray="2 1"/></svg>
<div class="t" style="left:1143px;top:364.4px;font-size:10px;color:#e0e0e0;font-weight:bold;">Objektformate</div>
<div class="a" style="left:1106px;top:383px;width:170px;height:1px;background:#262626;"></div>
<div class="a" style="left:1106px;top:384px;width:170px;height:1px;background:#3c3c3c;"></div>
<div class="a" style="left:1182px;top:388px;width:1px;height:4px;background:#111;"></div>
<div class="a" style="left:1184px;top:388px;width:1px;height:4px;background:#111;"></div>
<div class="a" style="left:1186px;top:388px;width:1px;height:4px;background:#111;"></div>
<div class="a" style="left:1188px;top:388px;width:1px;height:4px;background:#111;"></div>
<div class="a" style="left:1190px;top:388px;width:1px;height:4px;background:#111;"></div>
<div class="a" style="left:1192px;top:388px;width:1px;height:4px;background:#111;"></div>
<div class="a" style="left:1194px;top:388px;width:1px;height:4px;background:#111;"></div>
<div class="a" style="left:1196px;top:388px;width:1px;height:4px;background:#111;"></div>
<div class="a" style="left:1198px;top:388px;width:1px;height:4px;background:#111;"></div>
<div class="a" style="left:1200px;top:388px;width:1px;height:4px;background:#111;"></div>
<svg class="a" style="left:1116px;top:399px;" width="19" height="18" viewBox="0 0 19 18"><circle cx="8" cy="8" r="7" fill="#cfcfcf"/><path d="M3 5Q8 3 8 8Q8 12 12 14" stroke="#555" stroke-width="1.5" fill="none"/><path d="M10 7V17H18V11L13 9V7Z" fill="#e8e8e8" stroke="#444" stroke-width="0.8"/></svg>
<div class="t" style="left:1143px;top:405.4px;font-size:10px;color:#e0e0e0;font-weight:bold;">Hyperlinks</div>
<div class="a" style="left:1106px;top:424px;width:170px;height:1px;background:#262626;"></div>
<div class="a" style="left:1106px;top:425px;width:170px;height:1px;background:#3c3c3c;"></div>
<div class="a" style="left:1182px;top:429px;width:1px;height:4px;background:#111;"></div>
<div class="a" style="left:1184px;top:429px;width:1px;height:4px;background:#111;"></div>
<div class="a" style="left:1186px;top:429px;width:1px;height:4px;background:#111;"></div>
<div class="a" style="left:1188px;top:429px;width:1px;height:4px;background:#111;"></div>
<div class="a" style="left:1190px;top:429px;width:1px;height:4px;background:#111;"></div>
<div class="a" style="left:1192px;top:429px;width:1px;height:4px;background:#111;"></div>
<div class="a" style="left:1194px;top:429px;width:1px;height:4px;background:#111;"></div>
<div class="a" style="left:1196px;top:429px;width:1px;height:4px;background:#111;"></div>
<div class="a" style="left:1198px;top:429px;width:1px;height:4px;background:#111;"></div>
<div class="a" style="left:1200px;top:429px;width:1px;height:4px;background:#111;"></div>
<svg class="a" style="left:1116px;top:440px;" width="19" height="18" viewBox="0 0 19 18"><path d="M1.5 0V18" stroke="#ddd" stroke-width="1.5"/><rect x="3" y="3" width="9" height="5" fill="#d0d0d0"/><rect x="3" y="10" width="14" height="5" fill="#d0d0d0"/></svg>
<div class="t" style="left:1143px;top:446.4px;font-size:10px;color:#e0e0e0;font-weight:bold;">Ausrichten</div>
<svg class="a" style="left:1116px;top:468px;" width="19" height="18" viewBox="0 0 19 18"><rect x="1" y="1" width="9" height="9" fill="#d0d0d0"/><rect x="7" y="7" width="10" height="10" fill="#d8d8d8" stroke="#555" stroke-width="0.8"/><rect x="7" y="7" width="3" height="3" fill="#777"/></svg>
<div class="t" style="left:1143px;top:474.4px;font-size:10px;color:#e0e0e0;font-weight:bold;">Pathfinder</div>
<div class="a" style="left:1106px;top:493px;width:170px;height:1px;background:#262626;"></div>
<div class="a" style="left:1106px;top:494px;width:170px;height:1px;background:#3c3c3c;"></div>
<div class="a" style="left:1182px;top:498px;width:1px;height:4px;background:#111;"></div>
<div class="a" style="left:1184px;top:498px;width:1px;height:4px;background:#111;"></div>
<div class="a" style="left:1186px;top:498px;width:1px;height:4px;background:#111;"></div>
<div class="a" style="left:1188px;top:498px;width:1px;height:4px;background:#111;"></div>
<div class="a" style="left:1190px;top:498px;width:1px;height:4px;background:#111;"></div>
<div class="a" style="left:1192px;top:498px;width:1px;height:4px;background:#111;"></div>
<div class="a" style="left:1194px;top:498px;width:1px;height:4px;background:#111;"></div>
<div class="a" style="left:1196px;top:498px;width:1px;height:4px;background:#111;"></div>
<div class="a" style="left:1198px;top:498px;width:1px;height:4px;background:#111;"></div>
<div class="a" style="left:1200px;top:498px;width:1px;height:4px;background:#111;"></div>
<svg class="a" style="left:1116px;top:509px;" width="19" height="18" viewBox="0 0 19 18"><text x="0" y="15.5" font-family="Liberation Serif" font-style="italic" font-size="19" fill="#d4d4d4" stroke="#d4d4d4" stroke-width="0.4">fx</text></svg>
<div class="t" style="left:1143px;top:515.4px;font-size:10px;color:#e0e0e0;font-weight:bold;">Effekte</div>
<div class="a" style="left:1106px;top:534px;width:170px;height:1px;background:#262626;"></div>
<div class="a" style="left:1106px;top:535px;width:170px;height:1px;background:#3c3c3c;"></div>
<div class="a" style="left:1182px;top:539px;width:1px;height:4px;background:#111;"></div>
<div class="a" style="left:1184px;top:539px;width:1px;height:4px;background:#111;"></div>
<div class="a" style="left:1186px;top:539px;width:1px;height:4px;background:#111;"></div>
<div class="a" style="left:1188px;top:539px;width:1px;height:4px;background:#111;"></div>
<div class="a" style="left:1190px;top:539px;width:1px;height:4px;background:#111;"></div>
<div class="a" style="left:1192px;top:539px;width:1px;height:4px;background:#111;"></div>
<div class="a" style="left:1194px;top:539px;width:1px;height:4px;background:#111;"></div>
<div class="a" style="left:1196px;top:539px;width:1px;height:4px;background:#111;"></div>
<div class="a" style="left:1198px;top:539px;width:1px;height:4px;background:#111;"></div>
<div class="a" style="left:1200px;top:539px;width:1px;height:4px;background:#111;"></div>
<svg class="a" style="left:1116px;top:550px;" width="19" height="18" viewBox="0 0 19 18"><path d="M1 2H18M1 16H18" stroke="#ddd" stroke-width="1.3"/><path d="M1 5H4M15 5H18M1 9H3M16 9H18M1 13H4M15 13H18" stroke="#ddd" stroke-width="1.2"/><ellipse cx="9.5" cy="9" rx="5" ry="5" fill="#d0d0d0"/></svg>
<div class="t" style="left:1143px;top:556.4px;font-size:10px;color:#e0e0e0;font-weight:bold;">Textumfluss</div>
<div class="a" style="left:1106px;top:575px;width:170px;height:1px;background:#262626;"></div>
<div class="a" style="left:1106px;top:576px;width:170px;height:1px;background:#3c3c3c;"></div>
<div class="a" style="left:1182px;top:580px;width:1px;height:4px;background:#111;"></div>
<div class="a" style="left:1184px;top:580px;width:1px;height:4px;background:#111;"></div>
<div class="a" style="left:1186px;top:580px;width:1px;height:4px;background:#111;"></div>
<div class="a" style="left:1188px;top:580px;width:1px;height:4px;background:#111;"></div>
<div class="a" style="left:1190px;top:580px;width:1px;height:4px;background:#111;"></div>
<div class="a" style="left:1192px;top:580px;width:1px;height:4px;background:#111;"></div>
<div class="a" style="left:1194px;top:580px;width:1px;height:4px;background:#111;"></div>
<div class="a" style="left:1196px;top:580px;width:1px;height:4px;background:#111;"></div>
<div class="a" style="left:1198px;top:580px;width:1px;height:4px;background:#111;"></div>
<div class="a" style="left:1200px;top:580px;width:1px;height:4px;background:#111;"></div>
<svg class="a" style="left:1116px;top:591px;" width="19" height="18" viewBox="0 0 19 18"><rect x="1" y="3" width="3.5" height="14" fill="#d4d4d4"/><rect x="5.2" y="2" width="5" height="15" fill="#d8d8d8"/><path d="M2.7 6V15" stroke="#555" stroke-width="1" stroke-dasharray="1.2 1.8"/><path d="M5.5 5H10" stroke="#555" stroke-width="1"/><path d="M10.5 4.5L13.5 3.5L18.5 15.5L15.5 16.8Z" fill="#cfcfcf"/></svg>
<div class="t" style="left:1143px;top:597.4px;font-size:10px;color:#e0e0e0;font-weight:bold;">Commag-Bibliothek</div>
<svg class="a" style="left:1116px;top:619px;" width="19" height="18" viewBox="0 0 19 18"><rect x="1" y="3" width="3.5" height="14" fill="#d4d4d4"/><rect x="5.2" y="2" width="5" height="15" fill="#d8d8d8"/><path d="M2.7 6V15" stroke="#555" stroke-width="1" stroke-dasharray="1.2 1.8"/><path d="M5.5 5H10" stroke="#555" stroke-width="1"/><path d="M10.5 4.5L13.5 3.5L18.5 15.5L15.5 16.8Z" fill="#cfcfcf"/></svg>
<div class="t" style="left:1143px;top:625.4px;font-size:10px;color:#e0e0e0;font-weight:bold;">4eck-Media-Bibliothek</div>
<svg class="a" style="left:1116px;top:647px;" width="19" height="18" viewBox="0 0 19 18"><rect x="1" y="3" width="3.5" height="14" fill="#d4d4d4"/><rect x="5.2" y="2" width="5" height="15" fill="#d8d8d8"/><path d="M2.7 6V15" stroke="#555" stroke-width="1" stroke-dasharray="1.2 1.8"/><path d="M5.5 5H10" stroke="#555" stroke-width="1"/><path d="M10.5 4.5L13.5 3.5L18.5 15.5L15.5 16.8Z" fill="#cfcfcf"/></svg>
<div class="t" style="left:1143px;top:653.4px;font-size:10px;color:#e0e0e0;font-weight:bold;">Print-Layouts-Bibliothek</div>
<div class="a" style="left:1106px;top:672px;width:170px;height:1px;background:#262626;"></div>
<div class="a" style="left:1106px;top:673px;width:170px;height:1px;background:#3c3c3c;"></div>
<div class="a" style="left:1182px;top:677px;width:1px;height:4px;background:#111;"></div>
<div class="a" style="left:1184px;top:677px;width:1px;height:4px;background:#111;"></div>
<div class="a" style="left:1186px;top:677px;width:1px;height:4px;background:#111;"></div>
<div class="a" style="left:1188px;top:677px;width:1px;height:4px;background:#111;"></div>
<div class="a" style="left:1190px;top:677px;width:1px;height:4px;background:#111;"></div>
<div class="a" style="left:1192px;top:677px;width:1px;height:4px;background:#111;"></div>
<div class="a" style="left:1194px;top:677px;width:1px;height:4px;background:#111;"></div>
<div class="a" style="left:1196px;top:677px;width:1px;height:4px;background:#111;"></div>
<div class="a" style="left:1198px;top:677px;width:1px;height:4px;background:#111;"></div>
<div class="a" style="left:1200px;top:677px;width:1px;height:4px;background:#111;"></div>
<svg class="a" style="left:1116px;top:688px;" width="19" height="18" viewBox="0 0 19 18"><path d="M5.5 15.5A4.2 4.2 0 0 1 4 7.5A6 6 0 0 1 14.5 6A4.8 4.8 0 0 1 15 15.5Z" fill="none" stroke="#cfcfcf" stroke-width="1.8"/><path d="M6 12.5Q8.5 8.5 10.5 11Q12.5 13.5 14.5 10" stroke="#cfcfcf" stroke-width="1.6" fill="none"/></svg>
<div class="t" style="left:1143px;top:694.4px;font-size:10px;color:#e0e0e0;font-weight:bold;">CC-Bibliotheken</div>
<div class="a" style="left:1106px;top:714px;width:170px;height:2px;background:#262626;"></div>
<svg class="a" style="left:0px;top:0px;" width="130" height="665" viewBox="0 0 130 665"><g opacity="0.56" fill="#fff"><path d="M52 603Q54 594 64 595Q79 598 88 616L82 622Q75 606 65 602Q56 600 55.5 610Q57 628 70 637L66 641Q52 630 52 603Z"/><path d="M55.5 644Q57 655 70 655L79 654Q68 651 62 648Q58 645 59.5 639Z"/><g transform="rotate(-49 101.5 631)"><ellipse cx="101.5" cy="631" rx="31" ry="9.5" fill="none" stroke="#fff" stroke-width="5.5"/><ellipse cx="102" cy="631" rx="19" ry="3.5" fill="none" stroke="#fff" stroke-width="1.6"/></g></g></svg>
<div class="t" style="left:113px;top:635.5px;font-size:24px;color:rgba(255,255,255,0.55);font-weight:bold;letter-spacing:0.3px">PSD-Tutorials.de</div>
<div class="t" style="left:72px;top:670px;font-size:13px;color:rgba(255,255,255,0.55);font-weight:bold;">Kooperation mit</div>
<svg class="a" style="left:180px;top:663px;" width="19" height="17" viewBox="0 0 19 17"><defs><radialGradient id="sg"><stop offset="0" stop-color="#eaa040"/><stop offset="0.6" stop-color="#e0a860" stop-opacity="0.8"/><stop offset="1" stop-color="#c8b090" stop-opacity="0"/></radialGradient></defs><ellipse cx="9.5" cy="8.5" rx="9.5" ry="8.5" fill="url(#sg)"/></svg>
<div class="t" style="left:200px;top:669.5px;font-size:14.5px;color:rgba(255,255,255,0.5);font-weight:bold;">diedruckerei.de</div>
<div class="t" style="left:200px;top:685px;font-size:5px;color:rgba(255,255,255,0.35);font-weight:normal;">Ihre Online-Druckerei fuer Geschaeftskunden</div>
<div class="t" style="left:40px;top:670.5px;font-size:9px;color:#f4f4f4;font-weight:normal;font-family:'Liberation Mono';letter-spacing:-0.8px">http</div>
<svg class="a" style="left:1039px;top:126px;" width="13" height="19" viewBox="0 0 13 19"><path d="M1 1V16L4.5 12.5L7.5 18L9.5 17L6.8 11.5H11.5Z" fill="#fff" stroke="#000" stroke-width="1"/></svg>
</body></html>
